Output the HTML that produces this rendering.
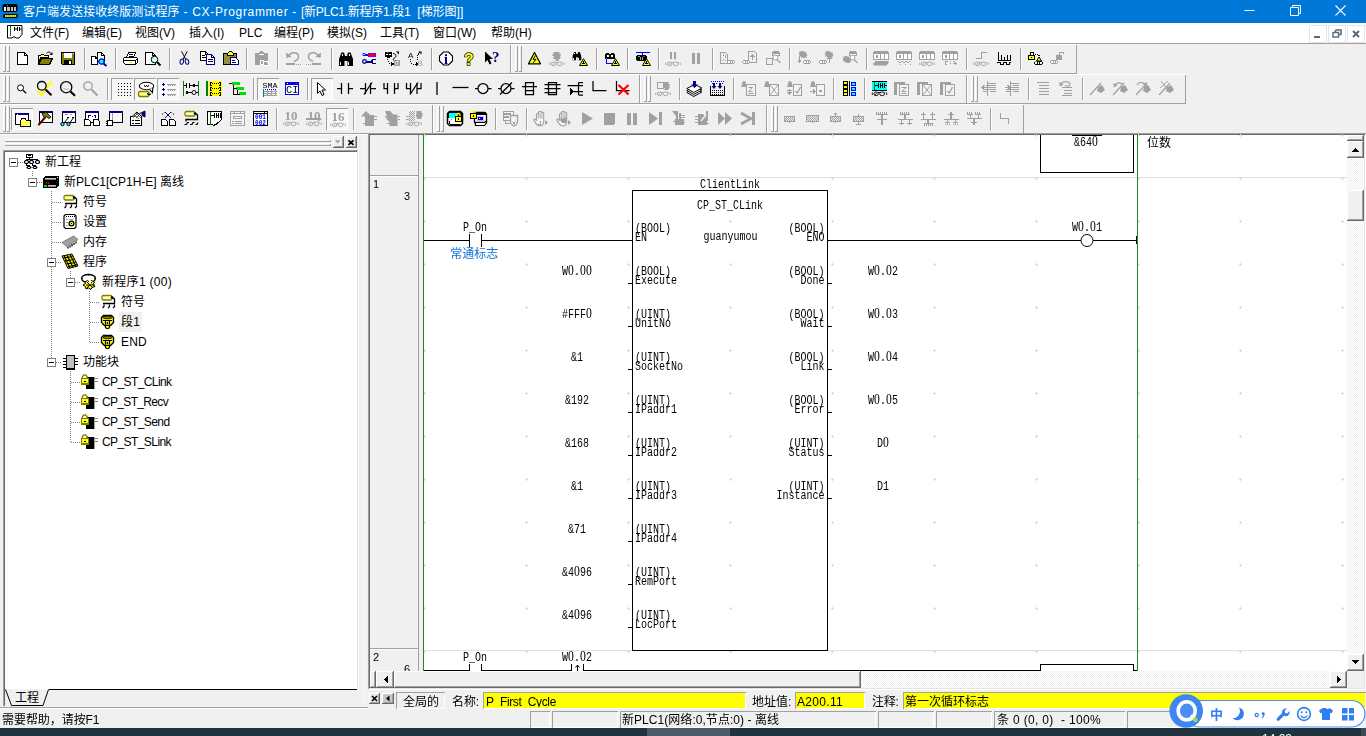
<!DOCTYPE html>
<html lang="zh-CN"><head><meta charset="utf-8"><title>CX-Programmer</title>
<style>
html,body{margin:0;padding:0}
body{width:1366px;height:736px;overflow:hidden;background:#f0f0f0;position:relative;
 font-family:"Liberation Sans","Noto Sans CJK SC",sans-serif;font-size:12px;color:#000}
.abs{position:absolute}
.tx{position:absolute;white-space:pre}
svg{position:absolute;overflow:hidden}
svg text{white-space:pre}
#tb,#ld{will-change:transform}

#title{left:0;top:0;width:1366px;height:23px;background:#0078d7;color:#fff}
#title .t{left:23px;top:0;line-height:22px;font-size:12px;white-space:pre;letter-spacing:0px}
#menu{left:0;top:23px;width:1366px;height:20px;background:#fff}
#menu span{position:absolute;top:1px;line-height:19px;font-size:12px;white-space:pre}
#menuline{left:0;top:43px;width:1366px;height:1px;background:#a0a0a0}
.mdib{position:absolute;top:2px;width:16px;height:16px;border:1px solid #e5e5e5;background:#fff}

#tb{left:0;top:44px}
#tb text{font-family:"Liberation Sans",sans-serif}

#lp{left:0;top:133px}
#lp text{font-family:"Liberation Sans",sans-serif}
.tr{font-size:12px}

#ld{left:368px;top:133px}
#ld text{font-family:"Liberation Mono",monospace;font-size:12px;fill:#000}
#ld text .z{font-family:"Liberation Serif",serif;font-size:14px;letter-spacing:0.2px}
#ld text .u{font-family:"Liberation Mono",monospace}
#ld text.cj{font-family:"Liberation Sans","Noto Sans CJK SC",sans-serif;font-size:12px}
#ld text.nm{font-family:"Liberation Sans",sans-serif;font-size:11px}

#bt{left:0;top:689px}
#ime{left:1160px;top:690px}
#ime text{font-family:"Liberation Sans","Noto Sans CJK SC",sans-serif}
#clock{left:1262px;top:732px;font-size:12px;line-height:14px;color:#fff}
</style></head>
<body>
<div id="title" class="abs"><svg style="left:2px;top:3px" width="17" height="17" viewBox="0 0 17 17">
<rect x="0.5" y="1" width="15" height="8" rx="2" fill="#000"/>
<rect x="2" y="4" width="2" height="4" fill="#fff"/><rect x="5" y="4" width="3" height="4" fill="#c0c0c0"/><rect x="9" y="4" width="2" height="4" fill="#c0c0c0"/><rect x="12" y="4" width="2" height="4" fill="#c0c0c0"/>
<rect x="5" y="2" width="1" height="1" fill="#0f0"/>
<path d="M2 11h13l1 1.500l-1 2.500h-13l-1-1.500z" fill="#000"/>
<path d="M3 12h11l0.500 1l-0.500 1h-11z" fill="#ff0"/>
<path d="M4 12l1 2M6 12l1 2M8 12l1 2M10 12l1 2M12 12l1 2" stroke="#808000" stroke-width="0.800"/>
</svg><span class="tx" style="left:23px;top:1px;line-height:22px;font-size:12px;letter-spacing:0.037px;">客户端发送接收终版测试程序</span><span class="tx" style="left:183.5px;top:1px;line-height:22px;font-size:12px;letter-spacing:0.676px;">- CX-Programmer -</span><span class="tx" style="left:301px;top:1px;line-height:22px;font-size:12px;letter-spacing:-0.277px;">[新PLC1.新程序1.段1</span><span class="tx" style="left:417.3px;top:1px;line-height:22px;font-size:12px;letter-spacing:-0.003px;">[梯形图]]</span><svg style="left:1228px;top:0" width="138" height="23" viewBox="0 0 138 23">
<path d="M16.500 10.500h10" stroke="#fff" stroke-width="1" fill="none"/>
<path d="M62.500 7.500h8v8h-8z M64.500 7.500v-2h8v8h-2" stroke="#fff" stroke-width="1" fill="none"/>
<path d="M107.500 5.500l10 10M117.500 5.500l-10 10" stroke="#fff" stroke-width="1.100" fill="none"/>
</svg></div><div id="menu" class="abs"><svg style="left:6px;top:1px" width="18" height="16" viewBox="0 0 18 16">
<path d="M1.500 1.500h14.500v9l-3 3.500h-3l-1-1h-2l-1 1h-4.500z" fill="#fff" stroke="#000" stroke-width="1"/>
<path d="M4.500 2v10" stroke="#008000" stroke-width="1"/>
<path d="M8.500 3v4M11.500 3v4M13.500 3v4M8.500 5h3M13.500 5h2" stroke="#000" stroke-width="1" fill="none"/>
</svg><span style="left:30px">文件(F)</span><span style="left:82px">编辑(E)</span><span style="left:135px">视图(V)</span><span style="left:189px">插入(I)</span><span style="left:239px">PLC</span><span style="left:274px">编程(P)</span><span style="left:327px">模拟(S)</span><span style="left:380px">工具(T)</span><span style="left:433px">窗口(W)</span><span style="left:491px">帮助(H)</span><div class="mdib" style="left:1309px"><svg style="left:0;top:0" width="16" height="16"><rect x="4" y="10" width="6" height="2" fill="#5a6b7b"/></svg></div><div class="mdib" style="left:1328px"><svg style="left:0;top:0" width="16" height="16"><path d="M6.500 4h5.500v4.500h-2M6.500 4v2" stroke="#5a6b7b" stroke-width="1.600" fill="none"/><rect x="4" y="6.500" width="5.500" height="4.500" stroke="#5a6b7b" stroke-width="1.400" fill="none"/></svg></div><div class="mdib" style="left:1347px"><svg style="left:0;top:0" width="16" height="16"><path d="M5 5l6 6M11 5l-6 6" stroke="#5a6b7b" stroke-width="2" fill="none"/></svg></div></div><div id="menuline" class="abs"></div><svg id="tb" width="1366" height="90" viewBox="0 0 1366 90" shape-rendering="crispEdges"><defs><pattern id="dith" width="2" height="2" patternUnits="userSpaceOnUse"><rect width="2" height="2" fill="#fff"/><rect width="1" height="1" fill="#f0f0f0"/><rect x="1" y="1" width="1" height="1" fill="#f0f0f0"/></pattern><pattern id="dithg" width="2" height="2" patternUnits="userSpaceOnUse"><rect width="2" height="2" fill="#f0f0f0"/><rect width="1" height="1" fill="#a0a0a0"/><rect x="1" y="1" width="1" height="1" fill="#a0a0a0"/></pattern></defs><path d="M0 89.500H1366" stroke="#a0a0a0" fill="none"/><path d="M510.5 0.5H-0.5V29" stroke="#fff" fill="none"/><path d="M510.5 0.5V29.5H-1" stroke="#a0a0a0" fill="none"/><path d="M3.5 27V2.5H5" stroke="#fff" fill="none"/><path d="M5.5 2V27.5H3" stroke="#a0a0a0" fill="none"/><path d="M7.5 27V2.5H9" stroke="#fff" fill="none"/><path d="M9.5 2V27.5H7" stroke="#a0a0a0" fill="none"/><g transform="translate(14,7)"><path d="M3.5 1.5h7l3 3v9h-10z" fill="#fff" stroke="#000" stroke-width="1" /><path d="M10.5 1.5v3h3" stroke="#000" stroke-width="1" fill="none" /></g><g transform="translate(37,7)"><path d="M1.5 12.5v-8h2l1-1h2l1 1h4v2h-8z" fill="#ffff80" stroke="#000" stroke-width="1" /><path d="M1.5 13.5l3-6h11l-3 6z" fill="#808000" stroke="#000" stroke-width="1" /><path d="M9.5 2.500c1-2 4-2 5 0.500" stroke="#000" stroke-width="1" fill="none" shape-rendering="geometricPrecision"/><path d="M15.500 1v3h-3z" fill="#000"  shape-rendering="geometricPrecision"/></g><g transform="translate(60,7)"><path d="M1.500 1.500h13v12h-12l-1-1z" fill="#808000" stroke="#000" stroke-width="1" /><rect x="4" y="2" width="8" height="5" fill="#fff"/><rect x="13" y="2" width="1" height="1" fill="#fff"/><rect x="4" y="9" width="8" height="4" fill="#000"/><rect x="9" y="10" width="2" height="3" fill="#fff"/></g><path d="M84.5 4V26" stroke="#a0a0a0" fill="none"/><path d="M85.5 4V26" stroke="#fff" fill="none"/><g transform="translate(91,7)"><path d="M0.500 5.500h4l2 2v6h-6z" fill="#fff" stroke="#000" stroke-width="1" /><path d="M4.500 5.500v2h2" stroke="#000" stroke-width="1" fill="none" /><path d="M6.500 1.500h4l2.500 2.500v6.500h-6.500z" fill="#fff" stroke="#000" stroke-width="1" /><path d="M10.500 1.500v2.500h2.500" stroke="#000" stroke-width="1" fill="none" /><circle cx="10.5" cy="10.5" r="2.7" fill="#00ffff" stroke="#0000ff" stroke-width="1.2" shape-rendering="geometricPrecision"/><path d="M12.500 12.500l3 2.500" stroke="#000080" stroke-width="2" fill="none" shape-rendering="geometricPrecision"/></g><path d="M115.5 4V26" stroke="#a0a0a0" fill="none"/><path d="M116.5 4V26" stroke="#fff" fill="none"/><g transform="translate(122,7)"><path d="M4.500 6.500l2-5h7l-2 5z" fill="#fff" stroke="#000" stroke-width="1" /><path d="M7 3.500h4M6.500 5h4" stroke="#000" stroke-width="1" fill="none" /><path d="M1.500 7.500l2-1.500h10l2 1.500v4l-2 2h-10l-2-2z" fill="#fff" stroke="#000" stroke-width="1" /><path d="M1.500 9.500h12l2-2M13.500 9.500v4" stroke="#000" stroke-width="1" fill="none" /><path d="M7 11.500h3" stroke="#ffff00" stroke-width="1" fill="none" /><path d="M3 13.500h10" stroke="#000" stroke-width="1" fill="none" /></g><g transform="translate(145,7)"><path d="M0.500 1.500h7l3 3v9h-10z" fill="#fff" stroke="#000" stroke-width="1" /><path d="M7.500 1.500v3h3" stroke="#000" stroke-width="1" fill="none" /><circle cx="9.5" cy="8.5" r="3.3" fill="#d0ffff" stroke="#000" stroke-width="1" shape-rendering="geometricPrecision"/><path d="M7.800 7.800l1.200-1.200" stroke="#00ffff" stroke-width="1" fill="none" shape-rendering="geometricPrecision"/><path d="M12 11l3.500 3.500" stroke="#000" stroke-width="2" fill="none" shape-rendering="geometricPrecision"/></g><path d="M169.5 4V26" stroke="#a0a0a0" fill="none"/><path d="M170.5 4V26" stroke="#fff" fill="none"/><g transform="translate(176,7)"><path d="M5.600 0.300l4 8M11.200 0.300l-4 8" stroke="#000" stroke-width="1" fill="none" shape-rendering="geometricPrecision"/><ellipse cx="5.800" cy="10.600" rx="1.700" ry="2.700" transform="rotate(15 5.800 10.600)" fill="none" stroke="#000080" stroke-width="1.050" shape-rendering="geometricPrecision"/><ellipse cx="11" cy="10.600" rx="1.700" ry="2.700" transform="rotate(-15 11 10.600)" fill="none" stroke="#000080" stroke-width="1.050" shape-rendering="geometricPrecision"/></g><g transform="translate(199,7)"><path d="M1.500 0.500h5l3 3v6h-8z" fill="#fff" stroke="#000" stroke-width="1" /><path d="M6.500 0.500v3h3M3 4.500h3M3 6.500h5" stroke="#000" stroke-width="1" fill="none" /><path d="M7.500 3.500h5l3 3v6.500h-8z" fill="#fff" stroke="#000080" stroke-width="1" /><path d="M12.500 3.500v3h3" stroke="#000080" stroke-width="1" fill="none" /><path d="M9 8.500h5M9 10.500h5" stroke="#000080" stroke-width="1" fill="none" /></g><g transform="translate(222,7)"><path d="M1.500 2.500h13v10.500h-13z" fill="#909040" stroke="#000" stroke-width="1" /><path d="M5.500 2.500l2-2h2l2 2v1.500h-6z" fill="#ffff00" stroke="#000" stroke-width="1" /><path d="M8.500 6.500h5l2.500 2.500v4.500h-7.500z" fill="#fff" stroke="#000080" stroke-width="1" /><path d="M10 9.500h3M10 11.500h4" stroke="#000080" stroke-width="1" fill="none" /></g><path d="M246.5 4V26" stroke="#a0a0a0" fill="none"/><path d="M247.5 4V26" stroke="#fff" fill="none"/><g transform="translate(253,7)"><path d="M2.500 2.500h12v10.500h-12z" fill="#a0a0a0" stroke="#a0a0a0" stroke-width="1" /><path d="M6 2.500l2-2h1l2 2z" fill="#a0a0a0" stroke="#a0a0a0" stroke-width="1" /><path d="M6 3.500h5" stroke="#fff" stroke-width="1" fill="none" /><path d="M7.500 9.500h3l1.500 1.500v2.500h-4.500z" fill="#a0a0a0" stroke="#fff" stroke-width="1" /><path d="M10.500 10.500h3.500l1.500 1.500v2h-5z" fill="#a0a0a0" stroke="#fff" stroke-width="1" /></g><path d="M277.5 4V26" stroke="#a0a0a0" fill="none"/><path d="M278.5 4V26" stroke="#fff" fill="none"/><g transform="translate(284,7)"><path d="M4.500 5.500c2-5 10-5 10 0.500c0 2.500-2 3.500-4.500 4.500" stroke="#a0a0a0" stroke-width="1.4" fill="none" shape-rendering="geometricPrecision"/><path d="M2 1.500l0.500 5.500l5-1.500z" fill="#a0a0a0"  shape-rendering="geometricPrecision"/><path d="M2 12.500h9" stroke="#a0a0a0" stroke-width="2" fill="none" /><path d="M12 13.500h1M14 13.500h1M16 13.500h1" stroke="#a0a0a0" stroke-width="1" fill="none" /></g><g transform="translate(307,7)"><g transform="translate(16,0) scale(-1,1)"><path d="M4.500 5.500c2-5 10-5 10 0.500c0 2.500-2 3.500-4.500 4.500" stroke="#a0a0a0" stroke-width="1.4" fill="none" shape-rendering="geometricPrecision"/><path d="M2 1.500l0.500 5.500l5-1.500z" fill="#a0a0a0"  shape-rendering="geometricPrecision"/><path d="M2 12.500h9" stroke="#a0a0a0" stroke-width="2" fill="none" /><path d="M12 13.500h1M14 13.500h1M16 13.500h1" stroke="#a0a0a0" stroke-width="1" fill="none" /></g></g><path d="M331.5 4V26" stroke="#a0a0a0" fill="none"/><path d="M332.5 4V26" stroke="#fff" fill="none"/><g transform="translate(338,7)"><path d="M1 15v-7l2.500-6.500h2.500l1 3.500h2l1-3.500h2.500l2.500 6.500v7h-5.500v-5h-3v5z" fill="#000"  shape-rendering="geometricPrecision"/><rect x="2" y="11" width="1" height="3" fill="#fff"/><rect x="10" y="11" width="1" height="3" fill="#fff"/><rect x="4" y="3" width="1" height="2" fill="#fff"/><rect x="11" y="3" width="1" height="2" fill="#fff"/></g><g transform="translate(361,7)"><path d="M2 3.500h5" stroke="#0000ff" stroke-width="2" fill="none" /><circle cx="3" cy="3.5" r="1.2" fill="#fff" stroke="#0000ff" stroke-width="1" shape-rendering="geometricPrecision"/><path d="M7 2h7v3h-7z" fill="#ff0000" stroke="#8000ff" stroke-width="1" /><path d="M4 10.500h7" stroke="#000080" stroke-width="2" fill="none" /><circle cx="3.5" cy="10.5" r="1.8" fill="#fff" stroke="#000080" stroke-width="1.3" shape-rendering="geometricPrecision"/><path d="M15 8.500h-3l-1 1v2l1 1h3" stroke="#000080" stroke-width="1.5" fill="none" /></g><g transform="translate(384,7)"><path d="M1.500 1.500h6v4h-6z" fill="#000" stroke="#000" stroke-width="1" /><rect x="2" y="3" width="2" height="1" fill="#fff"/><rect x="5" y="3" width="2" height="1" fill="#fff"/><rect x="3" y="1" width="1" height="1" fill="#0f0"/><path d="M3 6.500h3" stroke="#000" stroke-width="1" fill="none" /><path d="M9 2.500c2 0 3 1 3 3l-3 3l3 2" stroke="#000" stroke-width="1" fill="none" shape-rendering="geometricPrecision"/><path d="M12 0.500h3v3z" fill="#000"  shape-rendering="geometricPrecision"/><path d="M3 8v1M4 10v1M5 12v1" stroke="#000" stroke-width="1" fill="none" /><path d="M7 10.500l3.500 2.500l-3.500 2z" fill="#000"  /><path d="M10.500 9.500h5v5h-5z" fill="#d0d0d0" stroke="#a0a0a0" stroke-width="1" /><rect x="11" y="9" width="1" height="1" fill="#0a0"/><path d="M12.500 11v3M14.500 11v3" stroke="#a0a0a0" stroke-width="1" fill="none" /></g><g transform="translate(407,7)"><text x="1" y="7" font-size="8" fill="#000" font-weight="normal" text-anchor="start"  >A</text><text x="10.5" y="14.5" font-size="8" fill="#a0a0a0" font-weight="normal" text-anchor="start"  >B</text><path d="M3.500 8v2.500l2 2.500h3" stroke="#000" stroke-width="1" fill="none" stroke-dasharray="1 1"/><path d="M9 10.500l3 2.500l-3 2.500z" fill="#000"  /><path d="M10.500 9v-5l2-2.500" stroke="#000" stroke-width="1" fill="none" stroke-dasharray="1 1"/><path d="M11.500 0.500h3v3z" fill="#000"  shape-rendering="geometricPrecision"/></g><path d="M431.5 4V26" stroke="#a0a0a0" fill="none"/><path d="M432.5 4V26" stroke="#fff" fill="none"/><g transform="translate(438,7)"><path d="M5.500 1h5l4 4v5l-4 4h-5l-4-4v-5z" fill="#fff" stroke="#000" stroke-width="1.1" shape-rendering="geometricPrecision"/><text x="8" y="13" font-size="14" fill="#000080" font-weight="bold" text-anchor="middle" style="font-family:'Liberation Serif',serif" >i</text></g><g transform="translate(461,7)"><text x="8" y="13.5" font-size="16" fill="#ffff00" font-weight="bold" text-anchor="middle" style="font-family:'Liberation Sans',sans-serif" stroke="#000" stroke-width="1.400" paint-order="stroke" stroke-linejoin="round" shape-rendering="geometricPrecision">?</text></g><g transform="translate(484,7)"><path d="M1 0.500v11l2.500-2.500l2 4.500l2-1l-2-4.500h3.500z" fill="#000"  shape-rendering="geometricPrecision"/><text x="11.8" y="11" font-size="15" fill="#000080" font-weight="bold" text-anchor="middle" style="font-family:'Liberation Serif',serif" >?</text></g><path d="M1076.5 0.5H511.5V29" stroke="#fff" fill="none"/><path d="M1076.5 0.5V29.5H511" stroke="#a0a0a0" fill="none"/><path d="M515.5 27V2.5H517" stroke="#fff" fill="none"/><path d="M517.5 2V27.5H515" stroke="#a0a0a0" fill="none"/><path d="M519.5 27V2.5H521" stroke="#fff" fill="none"/><path d="M521.5 2V27.5H519" stroke="#a0a0a0" fill="none"/><g transform="translate(526,7)"><path d="M8.500 1.500l6 11.300h-12z" fill="#ffff00" stroke="#000" stroke-width="1.2" shape-rendering="geometricPrecision" stroke-linejoin="round"/><path d="M9.500 4.500l-2.500 3.800h3l-2.800 3.500" stroke="#000" stroke-width="1" fill="none" shape-rendering="geometricPrecision"/></g><g transform="translate(549,7)"><path d="M5 1h6l-1 2h2l-1 3h1l-3 4h-3l1-2h-3l1-3h-2z" fill="#a0a0a0"  shape-rendering="geometricPrecision"/><path d="M0.8 11.5v2.500M15.2 11.5v2.500" stroke="#a0a0a0" stroke-width="0.9" fill="none" shape-rendering="geometricPrecision"/><ellipse cx="4.6" cy="12.8" rx="2.200" ry="1.900" fill="none" stroke="#a0a0a0" stroke-width="0.900" shape-rendering="geometricPrecision"/><ellipse cx="10.6" cy="12.8" rx="2.400" ry="1.900" fill="none" stroke="#a0a0a0" stroke-width="0.900" shape-rendering="geometricPrecision"/><path d="M6.5 11.5h2.500M3.5 14l2-2.300M12.5 12.3l1.300-1.300" stroke="#a0a0a0" stroke-width="0.8" fill="none" shape-rendering="geometricPrecision"/></g><g transform="translate(572,7)"><g transform="translate(0,0) scale(0.62)"><path d="M1 15v-7l2.500-6.500h2.500l1 3.500h2l1-3.500h2.500l2.500 6.500v7h-5.500v-5h-3v5z" fill="#000"  shape-rendering="geometricPrecision"/><rect x="2" y="11" width="1" height="3" fill="#fff"/><rect x="10" y="11" width="1" height="3" fill="#fff"/><rect x="4" y="3" width="1" height="2" fill="#fff"/><rect x="11" y="3" width="1" height="2" fill="#fff"/></g><path d="M11.5 7.7l4 6.8h-8z" fill="#ffff00" stroke="#000" stroke-width="1" shape-rendering="geometricPrecision" stroke-linejoin="round"/><path d="M11.5 10v3" stroke="#000" stroke-width="1" fill="none" shape-rendering="geometricPrecision"/><path d="M10 12.5h3" stroke="#000" stroke-width="1" fill="none" shape-rendering="geometricPrecision"/></g><path d="M596.5 4V26" stroke="#a0a0a0" fill="none"/><path d="M597.5 4V26" stroke="#fff" fill="none"/><g transform="translate(603,7)"><path d="M2.500 3.500l1-1.500h2l0.500 1h2l0.500-1h2l1 1.500v4h-9z" fill="#000" stroke="#000" stroke-width="1" /><rect x="4" y="4" width="2" height="2" fill="#fff"/><rect x="8" y="4" width="2" height="2" fill="#fff"/><path d="M3.500 8v4.500h5" stroke="#0000ff" stroke-width="1" fill="none" /><rect x="3" y="7" width="1" height="1" fill="#0f0"/><path d="M12.5 7.7l4 6.8h-8z" fill="#ffff00" stroke="#000" stroke-width="1" shape-rendering="geometricPrecision" stroke-linejoin="round"/><path d="M12.5 10v3" stroke="#000" stroke-width="1" fill="none" shape-rendering="geometricPrecision"/><path d="M11 12.5h3" stroke="#000" stroke-width="1" fill="none" shape-rendering="geometricPrecision"/></g><path d="M627.5 4V26" stroke="#a0a0a0" fill="none"/><path d="M628.5 4V26" stroke="#fff" fill="none"/><g transform="translate(634,7)"><path d="M2 1.500h14M8.500 1.500v3" stroke="#0000ff" stroke-width="1" fill="none" /><path d="M3.500 4.500h8l1 1v3l-1 1h-8l-1-1v-3z" fill="#000" stroke="#000" stroke-width="1" /><rect x="4" y="5" width="2" height="1" fill="#0f0"/><rect x="9" y="5" width="2" height="1" fill="#ff0000"/><path d="M6.500 6v3M8.500 6v3" stroke="#a0a0a0" stroke-width="1" fill="none" /><path d="M12.5 7.7l4 6.8h-8z" fill="#ffff00" stroke="#000" stroke-width="1" shape-rendering="geometricPrecision" stroke-linejoin="round"/><path d="M12.5 10v3" stroke="#000" stroke-width="1" fill="none" shape-rendering="geometricPrecision"/><path d="M11 12.5h3" stroke="#000" stroke-width="1" fill="none" shape-rendering="geometricPrecision"/></g><path d="M658.5 4V26" stroke="#a0a0a0" fill="none"/><path d="M659.5 4V26" stroke="#fff" fill="none"/><g transform="translate(665,7)"><rect x="5" y="1" width="2" height="7" fill="#a0a0a0"/><rect x="9" y="1" width="2" height="7" fill="#a0a0a0"/><path d="M0.8 11.5v2.500M15.2 11.5v2.500" stroke="#a0a0a0" stroke-width="0.9" fill="none" shape-rendering="geometricPrecision"/><ellipse cx="4.6" cy="12.8" rx="2.200" ry="1.900" fill="none" stroke="#a0a0a0" stroke-width="0.900" shape-rendering="geometricPrecision"/><ellipse cx="10.6" cy="12.8" rx="2.400" ry="1.900" fill="none" stroke="#a0a0a0" stroke-width="0.900" shape-rendering="geometricPrecision"/><path d="M6.5 11.5h2.500M3.5 14l2-2.300M12.5 12.3l1.300-1.300" stroke="#a0a0a0" stroke-width="0.8" fill="none" shape-rendering="geometricPrecision"/></g><g transform="translate(688,7)"><rect x="4" y="2" width="3" height="11" fill="#a0a0a0"/><rect x="9" y="2" width="3" height="11" fill="#a0a0a0"/></g><path d="M712.5 4V26" stroke="#a0a0a0" fill="none"/><path d="M713.5 4V26" stroke="#fff" fill="none"/><g transform="translate(719,7)"><path d="M1.5 1.5h5l2 2v9h-7z" fill="#f0f0f0" stroke="#a0a0a0" stroke-width="1" /><path d="M4.500 3v2M6.500 4v3M4.500 8l-1 2M6.500 9v1" stroke="#a0a0a0" stroke-width="1" fill="none" /><path d="M9.5 9.5h5l1 1v1l-1 1h-5l-1-1v-1z" fill="#fff" stroke="#a0a0a0" stroke-width="1" /><path d="M11.5 9.5v3M13.5 9.5v3" stroke="#a0a0a0" stroke-width="1" fill="none" /></g><g transform="translate(742,7)"><path d="M6.5 0.5h6l2 2v9h-8z" fill="#f0f0f0" stroke="#a0a0a0" stroke-width="1" /><path d="M10.500 9v-5M8.500 6l2-2l2 2" stroke="#a0a0a0" stroke-width="1" fill="none" /><path d="M1.5 9.5h5l1 1v1l-1 1h-5l-1-1v-1z" fill="#fff" stroke="#a0a0a0" stroke-width="1" /><path d="M3.5 9.5v3M5.5 9.5v3" stroke="#a0a0a0" stroke-width="1" fill="none" /></g><g transform="translate(765,7)"><path d="M1.500 7.500h6v6h-6z" fill="#f0f0f0" stroke="#a0a0a0" stroke-width="1" /><path d="M7.500 1.500l1-1h5l1 1v3h-7z" fill="#fff" stroke="#a0a0a0" stroke-width="1" /><path d="M8 1.500h6" stroke="#a0a0a0" stroke-width="2" fill="none" /><circle cx="10.5" cy="6.5" r="2.5" fill="#fff" stroke="#a0a0a0" stroke-width="1" shape-rendering="geometricPrecision"/><path d="M12 8.500l3.500 3.500" stroke="#a0a0a0" stroke-width="1.3" fill="none" shape-rendering="geometricPrecision"/></g><path d="M789.5 4V26" stroke="#a0a0a0" fill="none"/><path d="M790.5 4V26" stroke="#fff" fill="none"/><g transform="translate(796,7)"><path d="M5 0h2v1l1-1l1 1l-1 1h1v2h-1l1 1l-1 1l-1-1v1h-2v-1l-1 1l-1-1l1-1h-1v-2h1l-1-1l1-1l1 1z" fill="#a0a0a0"  shape-rendering="geometricPrecision"/><path d="M7 1h2v1l1-1l1 1l-1 1h1v2h-1l1 1l-1 1l-1-1v1h-2v-1l-1 1l-1-1l1-1h-1v-2h1l-1-1l1-1l1 1z" fill="#a0a0a0"  shape-rendering="geometricPrecision"/><path d="M3.500 5v6M2 9.500l1.500 2l1.500-2" stroke="#a0a0a0" stroke-width="1" fill="none" /><path d="M8.5 9.5h5l1 1v1l-1 1h-5l-1-1v-1z" fill="#fff" stroke="#a0a0a0" stroke-width="1" /><path d="M10.5 9.5v3M12.5 9.5v3" stroke="#a0a0a0" stroke-width="1" fill="none" /></g><g transform="translate(819,7)"><path d="M8 0h2v1l1-1l1 1l-1 1h1v2h-1l1 1l-1 1l-1-1v1h-2v-1l-1 1l-1-1l1-1h-1v-2h1l-1-1l1-1l1 1z" fill="#a0a0a0"  shape-rendering="geometricPrecision"/><path d="M10 1h2v1l1-1l1 1l-1 1h1v2h-1l1 1l-1 1l-1-1v1h-2v-1l-1 1l-1-1l1-1h-1v-2h1l-1-1l1-1l1 1z" fill="#a0a0a0"  shape-rendering="geometricPrecision"/><path d="M10.500 12v-6M8.500 8l2-2l2 2" stroke="#a0a0a0" stroke-width="1" fill="none" /><path d="M1.5 9.5h5l1 1v1l-1 1h-5l-1-1v-1z" fill="#fff" stroke="#a0a0a0" stroke-width="1" /><path d="M3.5 9.5v3M5.5 9.5v3" stroke="#a0a0a0" stroke-width="1" fill="none" /></g><g transform="translate(842,7)"><path d="M3 5h2v1l1-1l1 1l-1 1h1v2h-1l1 1l-1 1l-1-1v1h-2v-1l-1 1l-1-1l1-1h-1v-2h1l-1-1l1-1l1 1z" fill="#a0a0a0"  shape-rendering="geometricPrecision"/><path d="M5 6h2v1l1-1l1 1l-1 1h1v2h-1l1 1l-1 1l-1-1v1h-2v-1l-1 1l-1-1l1-1h-1v-2h1l-1-1l1-1l1 1z" fill="#a0a0a0"  shape-rendering="geometricPrecision"/><path d="M7.500 1.500l1-1h5l1 1v3h-7z" fill="#fff" stroke="#a0a0a0" stroke-width="1" /><path d="M8 1.500h6" stroke="#a0a0a0" stroke-width="2" fill="none" /><circle cx="10.5" cy="6.5" r="2.5" fill="#fff" stroke="#a0a0a0" stroke-width="1" shape-rendering="geometricPrecision"/><path d="M12 8.500l3.500 3.500" stroke="#a0a0a0" stroke-width="1.3" fill="none" shape-rendering="geometricPrecision"/></g><path d="M866.5 4V26" stroke="#a0a0a0" fill="none"/><path d="M867.5 4V26" stroke="#fff" fill="none"/><g transform="translate(873,7)"><path d="M0.500 2l1.500-1.500h12l1.500 1.500v6.500h-15z" fill="#fff" stroke="#a0a0a0" stroke-width="1" /><path d="M1 1.500h14M1 2.500h14" stroke="#a0a0a0" stroke-width="1" fill="none" /><rect x="3" y="4" width="2" height="3" fill="#a0a0a0"/><path d="M7.500 3v5M11.500 3v5" stroke="#a0a0a0" stroke-width="1" fill="none" /><path d="M2.500 10h13v2l-2 2.500h-13v-2z" fill="#a0a0a0"  shape-rendering="geometricPrecision"/></g><g transform="translate(896,7)"><path d="M0.500 2l1.500-1.500h12l1.500 1.500v6.500h-15z" fill="#fff" stroke="#a0a0a0" stroke-width="1" /><path d="M1 1.500h14M1 2.500h14" stroke="#a0a0a0" stroke-width="1" fill="none" /><rect x="3" y="4" width="2" height="3" fill="#a0a0a0"/><path d="M7.500 3v5M11.500 3v5" stroke="#a0a0a0" stroke-width="1" fill="none" /><path d="M2 10l2 2l2-2l2 2l2-2l2 2l2-2" stroke="#a0a0a0" stroke-width="1" fill="none" shape-rendering="geometricPrecision"/><path d="M4 13.500h1M9 13.500h1M14 13.500h1" stroke="#a0a0a0" stroke-width="1" fill="none" /></g><g transform="translate(919,7)"><path d="M0.500 2l1.500-1.500h12l1.500 1.500v6.500h-15z" fill="#fff" stroke="#a0a0a0" stroke-width="1" /><path d="M1 1.500h14M1 2.500h14" stroke="#a0a0a0" stroke-width="1" fill="none" /><rect x="3" y="4" width="2" height="3" fill="#a0a0a0"/><path d="M7.500 3v5M11.500 3v5" stroke="#a0a0a0" stroke-width="1" fill="none" /><path d="M0.8 11.5v2.500M15.2 11.5v2.500" stroke="#a0a0a0" stroke-width="0.9" fill="none" shape-rendering="geometricPrecision"/><ellipse cx="4.6" cy="12.8" rx="2.200" ry="1.900" fill="none" stroke="#a0a0a0" stroke-width="0.900" shape-rendering="geometricPrecision"/><ellipse cx="10.6" cy="12.8" rx="2.400" ry="1.900" fill="none" stroke="#a0a0a0" stroke-width="0.900" shape-rendering="geometricPrecision"/><path d="M6.5 11.5h2.500M3.5 14l2-2.300M12.5 12.3l1.300-1.300" stroke="#a0a0a0" stroke-width="0.8" fill="none" shape-rendering="geometricPrecision"/></g><g transform="translate(942,7)"><path d="M0.500 2l1.500-1.500h12l1.500 1.500v6.500h-15z" fill="#fff" stroke="#a0a0a0" stroke-width="1" /><path d="M1 1.500h14M1 2.500h14" stroke="#a0a0a0" stroke-width="1" fill="none" /><rect x="3" y="4" width="2" height="3" fill="#a0a0a0"/><path d="M7.500 3v5M11.500 3v5" stroke="#a0a0a0" stroke-width="1" fill="none" /><path d="M3 10.500h3M8 10.500h1M11 10.500h2M3.500 11v2M3 13.500h2M8 12.500h1M11 12.500h3M13 11.500l1 1l-1 1" stroke="#a0a0a0" stroke-width="1" fill="none" /></g><path d="M966.5 4V26" stroke="#a0a0a0" fill="none"/><path d="M967.5 4V26" stroke="#fff" fill="none"/><g transform="translate(973,7)"><path d="M3 7.500h5.500v-6h5.500" stroke="#a0a0a0" stroke-width="1" fill="none" /><path d="M0.8 11.5v2.500M15.2 11.5v2.500" stroke="#a0a0a0" stroke-width="0.9" fill="none" shape-rendering="geometricPrecision"/><ellipse cx="4.6" cy="12.8" rx="2.200" ry="1.900" fill="none" stroke="#a0a0a0" stroke-width="0.900" shape-rendering="geometricPrecision"/><ellipse cx="10.6" cy="12.8" rx="2.400" ry="1.900" fill="none" stroke="#a0a0a0" stroke-width="0.900" shape-rendering="geometricPrecision"/><path d="M6.5 11.5h2.500M3.5 14l2-2.300M12.5 12.3l1.300-1.300" stroke="#a0a0a0" stroke-width="0.8" fill="none" shape-rendering="geometricPrecision"/></g><g transform="translate(996,7)"><path d="M2.500 1v9M5.500 4v6M8.500 6v4M11.500 4v6M14.500 4v6" stroke="#000" stroke-width="1" fill="none" /><path d="M2 9.500h13" stroke="#000" stroke-width="1.5" fill="none" /><path d="M1 11.500h3v2h3v-2h3v2h3v-2h2" stroke="#000" stroke-width="1" fill="none" /></g><path d="M1020.5 4V26" stroke="#a0a0a0" fill="none"/><path d="M1021.5 4V26" stroke="#fff" fill="none"/><g transform="translate(1027,7)"><path d="M3.500 4v-2l1-1h1l1 1v2" stroke="#000" stroke-width="1" fill="none" /><path d="M1.500 4.500h6v4h-6z" fill="#ffff00" stroke="#000" stroke-width="1" /><rect x="4" y="6" width="1" height="1" fill="#000"/><path d="M8 3.500h3l1.500 1.500v2" stroke="#000" stroke-width="1" fill="none" stroke-dasharray="1 1"/><path d="M12 6l2.500 4h-5z" fill="#ffff00" stroke="#000" stroke-width="1" shape-rendering="geometricPrecision"/><path d="M8.500 10.500h6l1 1v1l-1 1h-6l-1-1v-1z" fill="#fff" stroke="#000" stroke-width="1" /><rect x="8" y="10" width="2" height="1" fill="#0f0"/><path d="M10.500 11v2M12.500 11v2" stroke="#000" stroke-width="1" fill="none" /></g><g transform="translate(1050,7)"><path d="M9.500 4v-2l1-1h2l1 1v1" stroke="#a0a0a0" stroke-width="1" fill="none" /><path d="M6.500 4.500h5v4h-5z" fill="#a0a0a0" stroke="#a0a0a0" stroke-width="1" /><path d="M1.5 9.5h5l1 1v1l-1 1h-5l-1-1v-1z" fill="#fff" stroke="#a0a0a0" stroke-width="1" /><path d="M3.5 9.5v3M5.5 9.5v3" stroke="#a0a0a0" stroke-width="1" fill="none" /></g><path d="M639.5 30.5H-0.5V59" stroke="#fff" fill="none"/><path d="M639.5 30.5V59.5H-1" stroke="#a0a0a0" fill="none"/><path d="M3.5 57V32.5H5" stroke="#fff" fill="none"/><path d="M5.5 32V57.5H3" stroke="#a0a0a0" fill="none"/><path d="M7.5 57V32.5H9" stroke="#fff" fill="none"/><path d="M9.5 32V57.5H7" stroke="#a0a0a0" fill="none"/><g transform="translate(14,37)"><circle cx="6.5" cy="6.8" r="3" fill="#fff" stroke="#000" stroke-width="1" shape-rendering="geometricPrecision"/><path d="M9 9.300l3.200 3" stroke="#000" stroke-width="1.3" fill="none" shape-rendering="geometricPrecision"/></g><g transform="translate(37,37)"><path d="M0.500 10l3.700 4l10.800-13.800" stroke="#ffff00" stroke-width="2" fill="none" shape-rendering="geometricPrecision"/><circle cx="4.8" cy="4.8" r="4.3" fill="none" stroke="#000" stroke-width="1.3" shape-rendering="geometricPrecision"/><path d="M8.500 8.500l6 5.800" stroke="#000" stroke-width="2.2" fill="none" shape-rendering="geometricPrecision"/></g><g transform="translate(60,37)"><circle cx="6.2" cy="6.2" r="5.6" fill="none" stroke="#000" stroke-width="1.3" shape-rendering="geometricPrecision"/><path d="M4 7c1 2 3.500 2 4.500 0" stroke="#a0a0a0" stroke-width="1" fill="none" shape-rendering="geometricPrecision"/><path d="M10.500 10.500l4.500 4.300" stroke="#000" stroke-width="2.2" fill="none" shape-rendering="geometricPrecision"/></g><g transform="translate(83,37)"><circle cx="5" cy="5" r="4.2" fill="none" stroke="#a0a0a0" stroke-width="1.3" shape-rendering="geometricPrecision"/><path d="M8.500 8.500l6 6" stroke="#a0a0a0" stroke-width="2" fill="none" shape-rendering="geometricPrecision"/></g><path d="M107.5 34V56" stroke="#a0a0a0" fill="none"/><path d="M108.5 34V56" stroke="#fff" fill="none"/><rect x="112" y="35" width="21" height="21" fill="url(#dith)"/><path d="M111.5 56V34.5H133" stroke="#a0a0a0" fill="none"/><path d="M132.5 35V55.5H112" stroke="#fff" fill="none"/><g transform="translate(115,38)"><rect x="3" y="1" width="1" height="1" fill="#000"/><rect x="3" y="4" width="1" height="1" fill="#000"/><rect x="3" y="7" width="1" height="1" fill="#000"/><rect x="3" y="10" width="1" height="1" fill="#000"/><rect x="3" y="13" width="1" height="1" fill="#000"/><rect x="6" y="1" width="1" height="1" fill="#000"/><rect x="6" y="4" width="1" height="1" fill="#000"/><rect x="6" y="7" width="1" height="1" fill="#000"/><rect x="6" y="10" width="1" height="1" fill="#000"/><rect x="6" y="13" width="1" height="1" fill="#000"/><rect x="9" y="1" width="1" height="1" fill="#000"/><rect x="9" y="4" width="1" height="1" fill="#000"/><rect x="9" y="7" width="1" height="1" fill="#000"/><rect x="9" y="10" width="1" height="1" fill="#000"/><rect x="9" y="13" width="1" height="1" fill="#000"/><rect x="12" y="1" width="1" height="1" fill="#000"/><rect x="12" y="4" width="1" height="1" fill="#000"/><rect x="12" y="7" width="1" height="1" fill="#000"/><rect x="12" y="10" width="1" height="1" fill="#000"/><rect x="12" y="13" width="1" height="1" fill="#000"/><rect x="15" y="1" width="1" height="1" fill="#000"/><rect x="15" y="4" width="1" height="1" fill="#000"/><rect x="15" y="7" width="1" height="1" fill="#000"/><rect x="15" y="10" width="1" height="1" fill="#000"/><rect x="15" y="13" width="1" height="1" fill="#000"/></g><rect x="135" y="35" width="21" height="21" fill="url(#dith)"/><path d="M134.5 56V34.5H156" stroke="#a0a0a0" fill="none"/><path d="M155.5 35V55.5H135" stroke="#fff" fill="none"/><g transform="translate(138,38)"><ellipse cx="8.500" cy="4" rx="7.200" ry="3.700" fill="#fff" stroke="#000" stroke-width="1.100" shape-rendering="geometricPrecision"/><path d="M11.500 7.200l3 3.400l0.200-4.800z" fill="#fff"  shape-rendering="geometricPrecision"/><path d="M11.500 7.400l3 3.200l0.200-4.600" stroke="#000" stroke-width="1.1" fill="none" shape-rendering="geometricPrecision"/><path d="M6.300 3l1 2l1.200-1.600l1.200 1.600l1-2" stroke="#000" stroke-width="0.9" fill="none" shape-rendering="geometricPrecision"/><path d="M1.500 9.500h8.500l1 1v3l-1 1h-8.500l-1-1v-3z" fill="#ffff60" stroke="#808000" stroke-width="1.3" shape-rendering="geometricPrecision"/><path d="M2 11.500h8M3 12.500h8" stroke="#fff" stroke-width="1" fill="none" stroke-dasharray="1 1"/><path d="M9.500 11.200c0.300 1.800 2 1.800 3.200 0.500" stroke="#000" stroke-width="1.4" fill="none" shape-rendering="geometricPrecision"/></g><rect x="158" y="35" width="21" height="21" fill="url(#dith)"/><path d="M157.5 56V34.5H179" stroke="#a0a0a0" fill="none"/><path d="M178.5 35V55.5H158" stroke="#fff" fill="none"/><g transform="translate(161,38)"><path d="M2.500 1l1.500 1.500l-1.500 1.500l-1.500-1.500z" fill="#000080"  /><path d="M6 2.5h9" stroke="#a0a0a0" stroke-width="1" fill="none" /><path d="M7.500 3v1M9.500 3v1M11.500 3v1M13.500 3v1" stroke="#a0a0a0" stroke-width="1" fill="none" /><path d="M2.500 6l1.500 1.500l-1.500 1.500l-1.500-1.500z" fill="#000080"  /><path d="M6 7.5h9" stroke="#a0a0a0" stroke-width="1" fill="none" /><path d="M7.500 8v1M9.500 8v1M11.500 8v1M13.500 8v1" stroke="#a0a0a0" stroke-width="1" fill="none" /><path d="M2.500 11l1.500 1.500l-1.500 1.500l-1.500-1.500z" fill="#000080"  /><path d="M6 12.5h9" stroke="#a0a0a0" stroke-width="1" fill="none" /><path d="M7.500 13v1M9.500 13v1M11.500 13v1M13.500 13v1" stroke="#a0a0a0" stroke-width="1" fill="none" /></g><g transform="translate(183,37)"><path d="M0.500 0v15M15.500 0v15" stroke="#008000" stroke-width="1" fill="none" /><path d="M1 4.500h3M6 4.500h4M12 4.500h3M3.500 2v5M6.500 2v5" stroke="#000" stroke-width="1" fill="none" /><rect x="10" y="3" width="2" height="3" fill="#000"/><path d="M5 11.500h4M13 11.500h2" stroke="#000" stroke-width="1" fill="none" /><rect x="3" y="10" width="2" height="3" fill="#000"/><circle cx="11" cy="11.5" r="2" fill="#fff" stroke="#000" stroke-width="1" shape-rendering="geometricPrecision"/></g><g transform="translate(206,37)"><rect x="0" y="0" width="2" height="15" fill="#008000"/><rect x="3" y="0" width="13" height="15" fill="#ffff00"/><path d="M6 1.5h-1.500v3h1.500M13 1.5h1.500v3h-1.500" stroke="#000" stroke-width="1" fill="none" /><path d="M6 2.5h7" stroke="#000" stroke-width="1" fill="none" stroke-dasharray="1 1"/><path d="M6 6.5h-1.500v3h1.500M13 6.5h1.500v3h-1.500" stroke="#000" stroke-width="1" fill="none" /><path d="M6 7.5h7" stroke="#000" stroke-width="1" fill="none" stroke-dasharray="1 1"/><path d="M6 11.5h-1.500v3h1.500M13 11.5h1.500v3h-1.500" stroke="#000" stroke-width="1" fill="none" /><path d="M6 12.5h7" stroke="#000" stroke-width="1" fill="none" stroke-dasharray="1 1"/></g><g transform="translate(229,37)"><rect x="3" y="1" width="8" height="3" fill="#00e000"/><rect x="7" y="6" width="8" height="3" fill="#00e000"/><rect x="10" y="11" width="7" height="3" fill="#00e000"/><path d="M0 2.500h3M4.500 4v10M4.500 7.500h3M8.500 9v5M4.500 13.500h6" stroke="#000" stroke-width="1.3" fill="none" /></g><path d="M253.5 34V56" stroke="#a0a0a0" fill="none"/><path d="M254.5 34V56" stroke="#fff" fill="none"/><rect x="258" y="35" width="21" height="21" fill="url(#dith)"/><path d="M257.5 56V34.5H279" stroke="#a0a0a0" fill="none"/><path d="M278.5 35V55.5H258" stroke="#fff" fill="none"/><g transform="translate(261,38)"><text x="9" y="5.5" font-size="7.5" fill="#000" font-weight="normal" text-anchor="middle" style="font-family:'Liberation Mono',monospace" textLength="15" lengthAdjust="spacingAndGlyphs">SMA</text><path d="M2 7.500h14" stroke="#0000ff" stroke-width="1" fill="none" stroke-dasharray="1 1"/><path d="M2.500 7v8" stroke="#008080" stroke-width="1" fill="none" /><path d="M3 9.500h13M3 11.500h13M3 13.500h13M6.500 8v6M10.500 8v6M14.500 8v6" stroke="#a0a0a0" stroke-width="1" fill="none" /></g><g transform="translate(283,37)"><path d="M2.500 1.500h13v12h-13z" fill="#fff" stroke="#0000ff" stroke-width="1" /><rect x="3" y="1" width="13" height="3" fill="#0000ff"/><rect x="4" y="2" width="1" height="1" fill="#fff"/><rect x="13" y="2" width="1" height="1" fill="#ff0000"/><text x="9.2" y="12" font-size="10.5" fill="#000" font-weight="normal" text-anchor="middle" style="font-family:'Liberation Mono',monospace" >CI</text></g><path d="M307.5 34V56" stroke="#a0a0a0" fill="none"/><path d="M308.5 34V56" stroke="#fff" fill="none"/><rect x="312" y="35" width="21" height="21" fill="url(#dith)"/><path d="M311.5 56V34.5H333" stroke="#a0a0a0" fill="none"/><path d="M332.5 35V55.5H312" stroke="#fff" fill="none"/><g transform="translate(315,38)"><path d="M2.500 0.500v11l2.500-2.500l2 4.500l2-1l-2-4.500h3.500z" fill="#fff" stroke="#000" stroke-width="1" shape-rendering="geometricPrecision"/></g><g transform="translate(337,37)"><path d="M0 7.500h4.500M11.500 7.500h4.500M4.500 2v11M11.500 2v11" stroke="#000" stroke-width="1.25" fill="none" shape-rendering="geometricPrecision"/></g><g transform="translate(360,37)"><path d="M0 7.500h5.500M10.500 7.500h5.500M5.500 2v11M10.500 2v11" stroke="#000" stroke-width="1.25" fill="none" shape-rendering="geometricPrecision"/><path d="M4 13.500l8-12" stroke="#000" stroke-width="1.3" fill="none" shape-rendering="geometricPrecision"/></g><g transform="translate(383,37)"><path d="M1 2v5.500h3.500M4.500 2v11M11.500 2v11M11.500 7.500h3.500v-5.500" stroke="#000" stroke-width="1.25" fill="none" shape-rendering="geometricPrecision"/></g><g transform="translate(406,37)"><path d="M0.500 2v5.500h4M4.500 2v11M11 2v11M11 7.500h4v-5.500" stroke="#000" stroke-width="1.25" fill="none" shape-rendering="geometricPrecision"/><path d="M4 13.500l8-12" stroke="#000" stroke-width="1.3" fill="none" shape-rendering="geometricPrecision"/></g><g transform="translate(429,37)"><path d="M8 1v13" stroke="#000" stroke-width="1.3" fill="none" shape-rendering="geometricPrecision"/></g><g transform="translate(452,37)"><path d="M0.500 6.500h16" stroke="#000" stroke-width="1.3" fill="none" shape-rendering="geometricPrecision"/></g><g transform="translate(475,37)"><path d="M0 7.500h3M13 7.500h3.500" stroke="#000" stroke-width="1.25" fill="none" shape-rendering="geometricPrecision"/><circle cx="8" cy="7.5" r="5" fill="none" stroke="#000" stroke-width="1.25" shape-rendering="geometricPrecision"/></g><g transform="translate(498,37)"><path d="M0 7.500h3M13 7.500h3.500" stroke="#000" stroke-width="1.25" fill="none" shape-rendering="geometricPrecision"/><circle cx="8" cy="7.5" r="5" fill="none" stroke="#000" stroke-width="1.25" shape-rendering="geometricPrecision"/><path d="M2 13.500l12-12" stroke="#000" stroke-width="1.3" fill="none" shape-rendering="geometricPrecision"/></g><g transform="translate(521,37)"><path d="M4.500 1.500h8v12h-8z" fill="none" stroke="#000" stroke-width="1.25" shape-rendering="geometricPrecision"/><path d="M1 5.500h15M4.500 9.500h8" stroke="#000" stroke-width="1.25" fill="none" shape-rendering="geometricPrecision"/></g><g transform="translate(544,37)"><path d="M4.500 1.500h8v12h-8z" fill="none" stroke="#000" stroke-width="1.25" shape-rendering="geometricPrecision"/><path d="M0.500 3.500h16M0.500 7.500h16M0.500 11.500h12" stroke="#000" stroke-width="1.25" fill="none" shape-rendering="geometricPrecision"/></g><g transform="translate(567,37)"><path d="M0.500 4.500h15.500M11.500 1.500v12.500M11.500 1.500h4.500M11.500 14h4.500M7 10.500h9" stroke="#000" stroke-width="1.25" fill="none" shape-rendering="geometricPrecision"/><path d="M3 7v7l4.500-3.500z" fill="#000"  /></g><g transform="translate(590,37)"><path d="M3 0v9.500h13.500" stroke="#000" stroke-width="1.25" fill="none" shape-rendering="geometricPrecision"/></g><g transform="translate(613,37)"><path d="M3.500 0v9.500h13" stroke="#000" stroke-width="1.25" fill="none" shape-rendering="geometricPrecision"/><path d="M5.500 4l10 9.500M15.500 4l-10 9.500" stroke="#ff0000" stroke-width="2.2" fill="none" shape-rendering="geometricPrecision"/></g><path d="M966.5 30.5H640.5V59" stroke="#fff" fill="none"/><path d="M966.5 30.5V59.5H640" stroke="#a0a0a0" fill="none"/><path d="M644.5 57V32.5H646" stroke="#fff" fill="none"/><path d="M646.5 32V57.5H644" stroke="#a0a0a0" fill="none"/><path d="M648.5 57V32.5H650" stroke="#fff" fill="none"/><path d="M650.5 32V57.5H648" stroke="#a0a0a0" fill="none"/><g transform="translate(655,37)"><path d="M2.500 1.500h6v6h-6z" fill="#f0f0f0" stroke="#a0a0a0" stroke-width="1" /><path d="M8 1h6l-1 2h2l-1 3h1l-2 3h-4l1-2h-2z" fill="#a0a0a0"  shape-rendering="geometricPrecision"/><path d="M0.8 11.5v2.500M15.2 11.5v2.500" stroke="#a0a0a0" stroke-width="0.9" fill="none" shape-rendering="geometricPrecision"/><ellipse cx="4.6" cy="12.8" rx="2.200" ry="1.900" fill="none" stroke="#a0a0a0" stroke-width="0.900" shape-rendering="geometricPrecision"/><ellipse cx="10.6" cy="12.8" rx="2.400" ry="1.900" fill="none" stroke="#a0a0a0" stroke-width="0.900" shape-rendering="geometricPrecision"/><path d="M6.5 11.5h2.500M3.5 14l2-2.300M12.5 12.3l1.300-1.300" stroke="#a0a0a0" stroke-width="0.8" fill="none" shape-rendering="geometricPrecision"/></g><path d="M679.5 34V56" stroke="#a0a0a0" fill="none"/><path d="M680.5 34V56" stroke="#fff" fill="none"/><g transform="translate(686,37)"><path d="M0.800 11.5l8-4l7 3.500l-8 4.500z" fill="#fff" stroke="#000" stroke-width="1" shape-rendering="geometricPrecision"/><path d="M0.800 9.5l8-4l7 3.500l-8 4.500z" fill="#fff" stroke="#000" stroke-width="1" shape-rendering="geometricPrecision"/><path d="M0.800 7.5l8-4l7 3.500l-8 4.500z" fill="#fff" stroke="#000" stroke-width="1" shape-rendering="geometricPrecision"/><path d="M7 0h3v3.500h2l-3.500 3.500l-3.500-3.500h2z" fill="#000080"  shape-rendering="geometricPrecision"/></g><g transform="translate(709,37)"><rect x="2" y="0" width="1" height="1" fill="#0000ff"/><rect x="4" y="0" width="1" height="1" fill="#0000ff"/><rect x="6" y="0" width="1" height="1" fill="#0000ff"/><rect x="8" y="0" width="1" height="1" fill="#0000ff"/><rect x="10" y="0" width="1" height="1" fill="#0000ff"/><rect x="12" y="0" width="1" height="1" fill="#0000ff"/><rect x="14" y="0" width="1" height="1" fill="#0000ff"/><rect x="3" y="2" width="1" height="1" fill="#0000ff"/><rect x="7" y="2" width="1" height="1" fill="#0000ff"/><rect x="11" y="2" width="1" height="1" fill="#0000ff"/><rect x="13" y="2" width="1" height="1" fill="#0000ff"/><path d="M4 2h2v3h1.500l-2.500 3l-2.500-3h1.500z" fill="#000080"  shape-rendering="geometricPrecision"/><path d="M10 2h2v3h1.500l-2.500 3l-2.500-3h1.500z" fill="#000080"  shape-rendering="geometricPrecision"/><path d="M1.500 5v9.500h14v-9.500" stroke="#000" stroke-width="1.3" fill="none" /><rect x="3" y="9" width="1" height="1" fill="#000"/><rect x="5" y="9" width="1" height="1" fill="#000"/><rect x="7" y="9" width="1" height="1" fill="#000"/><rect x="9" y="9" width="1" height="1" fill="#000"/><rect x="11" y="9" width="1" height="1" fill="#000"/><rect x="13" y="9" width="1" height="1" fill="#000"/><rect x="3" y="11" width="1" height="1" fill="#000"/><rect x="5" y="11" width="1" height="1" fill="#000"/><rect x="7" y="11" width="1" height="1" fill="#000"/><rect x="9" y="11" width="1" height="1" fill="#000"/><rect x="11" y="11" width="1" height="1" fill="#000"/><rect x="13" y="11" width="1" height="1" fill="#000"/><rect x="3" y="13" width="1" height="1" fill="#000"/><rect x="5" y="13" width="1" height="1" fill="#000"/><rect x="7" y="13" width="1" height="1" fill="#000"/><rect x="9" y="13" width="1" height="1" fill="#000"/><rect x="11" y="13" width="1" height="1" fill="#000"/><rect x="13" y="13" width="1" height="1" fill="#000"/></g><path d="M733.5 34V56" stroke="#a0a0a0" fill="none"/><path d="M734.5 34V56" stroke="#fff" fill="none"/><g transform="translate(740,37)"><path d="M1 6c0-1 1-1.500 1-3c0-2 1-3 2-3s2 1 2 3c0 1.500 1 2 1 3z" fill="#a0a0a0"  shape-rendering="geometricPrecision"/><path d="M6.5 3.5h9v11h-9z" fill="#f4f4f4" stroke="#a0a0a0" stroke-width="1" /><path d="M8.500 6.500h4l-4 4h4M8.500 12.500h5" stroke="#a0a0a0" stroke-width="1" fill="none" shape-rendering="geometricPrecision"/></g><g transform="translate(763,37)"><path d="M1 6c0-1 1-1.500 1-3c0-2 1-3 2-3s2 1 2 3c0 1.500 1 2 1 3z" fill="#a0a0a0"  shape-rendering="geometricPrecision"/><path d="M6.5 3.5h9v11h-9z" fill="#f4f4f4" stroke="#a0a0a0" stroke-width="1" /><path d="M7 4l8 10M15 4l-8 10" stroke="#a0a0a0" stroke-width="1" fill="none" shape-rendering="geometricPrecision"/></g><g transform="translate(786,37)"><path d="M1 6c0-1 1-1.500 1-3c0-2 1-3 2-3s2 1 2 3c0 1.500 1 2 1 3z" fill="#a0a0a0"  shape-rendering="geometricPrecision"/><path d="M7.5 3.5h8v11h-8z" fill="#f4f4f4" stroke="#a0a0a0" stroke-width="1" /><path d="M9.500 10l2 2l3-6" stroke="#a0a0a0" stroke-width="1.3" fill="none" shape-rendering="geometricPrecision"/><path d="M3.500 8v4M1.500 11l2 2l2-2" stroke="#a0a0a0" stroke-width="1" fill="none" /><path d="M1 9.500h5" stroke="#a0a0a0" stroke-width="1" fill="none" /></g><g transform="translate(809,37)"><path d="M1 6c0-1 1-1.500 1-3c0-2 1-3 2-3s2 1 2 3c0 1.500 1 2 1 3z" fill="#a0a0a0"  shape-rendering="geometricPrecision"/><path d="M7.5 3.5h8v11h-8z" fill="#f4f4f4" stroke="#a0a0a0" stroke-width="1" /><rect x="10" y="9" width="3" height="2" fill="#a0a0a0"/><path d="M1 10.500h5M4 8.500l2 2l-2 2" stroke="#a0a0a0" stroke-width="1" fill="none" /></g><path d="M833.5 34V56" stroke="#a0a0a0" fill="none"/><path d="M834.5 34V56" stroke="#fff" fill="none"/><g transform="translate(840,37)"><path d="M3.500 1v13M9.500 0v15" stroke="#000" stroke-width="1.3" fill="none" /><path d="M3.500 0.5h4v3h-4z" fill="#ffff00" stroke="#000" stroke-width="1" /><path d="M3.500 4.5h4v3h-4z" fill="#ffff00" stroke="#000" stroke-width="1" /><path d="M3.500 8.5h4v3h-4z" fill="#ffff00" stroke="#000" stroke-width="1" /><path d="M3.500 11.5h4v3h-4z" fill="#ffff00" stroke="#000" stroke-width="1" /><path d="M11.500 1.5h4v3h-4z" fill="#00ffff" stroke="#0000ff" stroke-width="1" /><path d="M11.500 6.5h4v3h-4z" fill="#00ffff" stroke="#0000ff" stroke-width="1" /><path d="M11.500 11.5h4v3h-4z" fill="#00ffff" stroke="#0000ff" stroke-width="1" /></g><path d="M864.5 34V56" stroke="#a0a0a0" fill="none"/><path d="M865.5 34V56" stroke="#fff" fill="none"/><g transform="translate(871,37)"><rect x="1" y="0" width="15" height="9" fill="#00ffff"/><path d="M3.500 0v9" stroke="#008000" stroke-width="1" fill="none" /><path d="M1 0.500h15M1 9.500h15" stroke="#000" stroke-width="1.3" fill="none" /><path d="M4 4.500h3M9 4.500h2M13 4.500h3M7.500 2v5M9.500 2v5M11.500 2v5M13.500 2v5" stroke="#000" stroke-width="1" fill="none" /><path d="M1.3 11.5v2.500M15.7 11.5v2.500" stroke="#000" stroke-width="0.9" fill="none" shape-rendering="geometricPrecision"/><ellipse cx="5.1" cy="12.8" rx="2.200" ry="1.900" fill="none" stroke="#000" stroke-width="0.900" shape-rendering="geometricPrecision"/><ellipse cx="11.1" cy="12.8" rx="2.400" ry="1.900" fill="none" stroke="#000" stroke-width="0.900" shape-rendering="geometricPrecision"/><path d="M7 11.5h2.500M4 14l2-2.300M13 12.3l1.300-1.300" stroke="#000" stroke-width="0.8" fill="none" shape-rendering="geometricPrecision"/></g><g transform="translate(894,37)"><path d="M0 1h11v2h-8v11h-3z" fill="#a0a0a0"  /><path d="M5.500 3.500h9v11h-9z" fill="#f4f4f4" stroke="#a0a0a0" stroke-width="1" /><path d="M7.500 6.500h5l-5 4h5M7.500 12.500h5" stroke="#a0a0a0" stroke-width="1" fill="none" shape-rendering="geometricPrecision"/></g><g transform="translate(917,37)"><path d="M0 1h11v2h-8v11h-3z" fill="#a0a0a0"  /><path d="M5.500 3.500h9v11h-9z" fill="#f4f4f4" stroke="#a0a0a0" stroke-width="1" /><path d="M6 4l8 10M14 4l-8 10" stroke="#a0a0a0" stroke-width="1" fill="none" shape-rendering="geometricPrecision"/></g><g transform="translate(940,37)"><path d="M0 1h11v2h-8v11h-3z" fill="#a0a0a0"  /><path d="M5.500 3.500h9v11h-9z" fill="#f4f4f4" stroke="#a0a0a0" stroke-width="1" /><path d="M7.500 10l2 2l3-6" stroke="#a0a0a0" stroke-width="1.3" fill="none" shape-rendering="geometricPrecision"/></g><path d="M1185.5 30.5H967.5V59" stroke="#fff" fill="none"/><path d="M1185.5 30.5V59.5H967" stroke="#a0a0a0" fill="none"/><path d="M971.5 57V32.5H973" stroke="#fff" fill="none"/><path d="M973.5 32V57.5H971" stroke="#a0a0a0" fill="none"/><path d="M975.5 57V32.5H977" stroke="#fff" fill="none"/><path d="M977.5 32V57.5H975" stroke="#a0a0a0" fill="none"/><g transform="translate(981,37)"><path d="M7 2.500h8M5 4.500h10M7 6.500h8M2 8.500h13M2 10.500h5M9 10.500h6M6.500 0v15" stroke="#a0a0a0" stroke-width="1" fill="none" /><path d="M1 6.500h5M3.500 4l-2.500 2.500l2.500 2.500" stroke="#a0a0a0" stroke-width="1" fill="none" /></g><g transform="translate(1004,37)"><path d="M7 2.500h8M9 4.500h6M7 6.500h8M2 8.500h13M2 10.500h5M9 10.500h6M6.500 0v15" stroke="#a0a0a0" stroke-width="1" fill="none" /><path d="M1 6.500h5M3.500 4l2.500 2.500l-2.500 2.500" stroke="#a0a0a0" stroke-width="1" fill="none" /></g><path d="M1028.5 34V56" stroke="#a0a0a0" fill="none"/><path d="M1029.5 34V56" stroke="#fff" fill="none"/><g transform="translate(1035,37)"><path d="M2 1.500h12M4 4.500h10M4 7.500h10M4 10.500h10M4 13.500h10" stroke="#a0a0a0" stroke-width="1" fill="none" /></g><g transform="translate(1058,37)"><path d="M4 6.500h10M6 9.500h8M6 12.500h8M4 14.500h10" stroke="#a0a0a0" stroke-width="1" fill="none" /><path d="M3 4.500c0-5 9-5 9-1c0 2-3 2-5 1" stroke="#a0a0a0" stroke-width="1.2" fill="none" shape-rendering="geometricPrecision"/><path d="M1 1l1 4.500l3.500-2z" fill="#a0a0a0"  shape-rendering="geometricPrecision"/></g><path d="M1082.5 34V56" stroke="#a0a0a0" fill="none"/><path d="M1083.5 34V56" stroke="#fff" fill="none"/><g transform="translate(1089,37)"><path d="M1 14l11-12" stroke="#a0a0a0" stroke-width="1.2" fill="none" shape-rendering="geometricPrecision"/><path d="M9 6l4-2l3 5l-4 3l-4-2z" fill="#a0a0a0"  shape-rendering="geometricPrecision"/></g><g transform="translate(1112,37)"><path d="M1 14l11-12" stroke="#a0a0a0" stroke-width="1.2" fill="none" shape-rendering="geometricPrecision"/><path d="M9 6l4-2l3 5l-4 3l-4-2z" fill="#a0a0a0"  shape-rendering="geometricPrecision"/><path d="M3 5c1-4 6-4 8-1" stroke="#a0a0a0" stroke-width="1.2" fill="none" shape-rendering="geometricPrecision"/><path d="M1 2l1 4.500l3.500-2z" fill="#a0a0a0"  shape-rendering="geometricPrecision"/></g><g transform="translate(1135,37)"><path d="M1 14l11-12" stroke="#a0a0a0" stroke-width="1.2" fill="none" shape-rendering="geometricPrecision"/><path d="M9 6l4-2l3 5l-4 3l-4-2z" fill="#a0a0a0"  shape-rendering="geometricPrecision"/><path d="M2 4c2-4 7-3 8 0" stroke="#a0a0a0" stroke-width="1.2" fill="none" shape-rendering="geometricPrecision"/><path d="M12 1l-0.500 4.500l-3.500-2z" fill="#a0a0a0"  shape-rendering="geometricPrecision"/></g><g transform="translate(1158,37)"><path d="M1 14l11-12" stroke="#a0a0a0" stroke-width="1.2" fill="none" shape-rendering="geometricPrecision"/><path d="M9 6l4-2l3 5l-4 3l-4-2z" fill="#a0a0a0"  shape-rendering="geometricPrecision"/><path d="M3 0l7 9M10 0l-8 7" stroke="#a0a0a0" stroke-width="1" fill="none" shape-rendering="geometricPrecision"/></g><path d="M432.5 60.5H-0.5V89" stroke="#fff" fill="none"/><path d="M432.5 60.5V89.5H-1" stroke="#a0a0a0" fill="none"/><path d="M3.5 87V62.5H5" stroke="#fff" fill="none"/><path d="M5.5 62V87.5H3" stroke="#a0a0a0" fill="none"/><path d="M7.5 87V62.5H9" stroke="#fff" fill="none"/><path d="M9.5 62V87.5H7" stroke="#a0a0a0" fill="none"/><rect x="12" y="65" width="21" height="21" fill="url(#dith)"/><path d="M11.5 86V64.5H33" stroke="#a0a0a0" fill="none"/><path d="M32.5 65V85.5H12" stroke="#fff" fill="none"/><g transform="translate(15,68)"><path d="M0.5 1.5h13v11h-13z" fill="#fff" stroke="#000" stroke-width="1.3" /><rect x="0" y="1" width="14" height="2" fill="#000080"/><rect x="2" y="2" width="1" height="1" fill="#fff"/><path d="M5.500 8.500l1.500-2h3l1.500 2h4v6h-10z" fill="#ffff80" stroke="#000" stroke-width="1" /><path d="M6 10.500h9M6 12.500h9" stroke="#ffff00" stroke-width="1" fill="none" stroke-dasharray="1 1"/></g><g transform="translate(37,67)"><path d="M2.5 0.5h13v11h-13z" fill="#fff" stroke="#000" stroke-width="1.3" /><rect x="2" y="0" width="14" height="2" fill="#000080"/><path d="M1.500 14l7-8" stroke="#800000" stroke-width="2" fill="none" shape-rendering="geometricPrecision"/><path d="M1 14.500l6.500-7.500" stroke="#000" stroke-width="0.8" fill="none" shape-rendering="geometricPrecision"/><path d="M5 2.500l4-1.500l5 5l-2 1.500l-3-2l-2 1z" fill="#808000" stroke="#000" stroke-width="0.8" shape-rendering="geometricPrecision"/></g><g transform="translate(60,67)"><path d="M2.5 0.5h13v11h-13z" fill="#fff" stroke="#000" stroke-width="1.3" /><rect x="2" y="0" width="14" height="2" fill="#000080"/><path d="M5 3.500h3M10 3.500h2" stroke="#a0a0a0" stroke-width="1" fill="none" /><path d="M3 13l6-7M9 13l5-7M7 6.500h2M12 6.500h2" stroke="#000" stroke-width="1" fill="none" shape-rendering="geometricPrecision"/><circle cx="2.5" cy="13" r="1.7" fill="#00ffff" stroke="#000" stroke-width="1" shape-rendering="geometricPrecision"/><circle cx="8.5" cy="13" r="1.7" fill="#00ffff" stroke="#000" stroke-width="1" shape-rendering="geometricPrecision"/></g><g transform="translate(83,67)"><path d="M2.5 0.5h13v11h-13z" fill="#fff" stroke="#000" stroke-width="1.3" /><rect x="2" y="0" width="14" height="2" fill="#000080"/><path d="M5.500 7v-3h2M12.500 7v-3h-2M8.500 5.500h1" stroke="#000080" stroke-width="1" fill="none" /><path d="M1.500 8.500h4l2 2v4h-6z" fill="#fff" stroke="#000" stroke-width="1.3" /><path d="M10.500 8.500h4l2 2v4h-6z" fill="#fff" stroke="#000" stroke-width="1.3" /></g><g transform="translate(106,67)"><path d="M3.5 0.5h13v11h-13z" fill="#fff" stroke="#000" stroke-width="1.3" /><rect x="3" y="0" width="14" height="2" fill="#000080"/><path d="M6.500 2v9" stroke="#a0a0a0" stroke-width="1" fill="none" /><rect x="7" y="3" width="8" height="8" fill="url(#dith)"/><path d="M1.500 9.500h5v5h-5z" fill="#fff" stroke="#000" stroke-width="1.3" /><path d="M0 10.500h1M0 12.500h1M0 14h1" stroke="#000" stroke-width="1" fill="none" /></g><g transform="translate(129,67)"><path d="M1.500 5.500h11v9h-11z" fill="#fff" stroke="#000" stroke-width="1.3" /><path d="M3 9.500h2M6 9.500h5M3 12.500h2M6 12.500h5" stroke="#000" stroke-width="1.3" fill="none" /><path d="M3 5.500l5-4.500l5 5" fill="#fff" stroke="#000" stroke-width="1" shape-rendering="geometricPrecision"/><path d="M5 4l5 4M7 2l5 5M9 2l-5 5M11 3l-4 4" stroke="#000" stroke-width="0.6" fill="none" shape-rendering="geometricPrecision"/><path d="M13 1.500l3-1.500v6l-3-1.500z" fill="#000080" stroke="#000080" stroke-width="1" shape-rendering="geometricPrecision"/><path d="M10 3.500c1-2 3-2 4-1" stroke="#000" stroke-width="1" fill="none" shape-rendering="geometricPrecision"/></g><path d="M153.5 64V86" stroke="#a0a0a0" fill="none"/><path d="M154.5 64V86" stroke="#fff" fill="none"/><g transform="translate(160,67)"><path d="M1.500 8.500h4l2 2v4h-6z" fill="#fff" stroke="#000" stroke-width="1.3" /><path d="M9.500 8.500h4l2 2v4h-6z" fill="#fff" stroke="#000" stroke-width="1.3" /><path d="M5 1l6 6M11 1l-6 6" stroke="#000080" stroke-width="1" fill="none" shape-rendering="geometricPrecision"/><path d="M2 3.500l2.500-2M14 3.500l-2.500-2" stroke="#000" stroke-width="1" fill="none" shape-rendering="geometricPrecision" stroke-dasharray="1.500 1"/></g><g transform="translate(183,67)"><path d="M3 0.500h8l1.500 1.500v1.500l-1.500 1.500h-8l-1-1v-2.500z" fill="#ffffa0" stroke="#808000" stroke-width="1.3" shape-rendering="geometricPrecision"/><path d="M3 2.500h8" stroke="#fff" stroke-width="1" fill="none" stroke-dasharray="1 1"/><circle cx="12" cy="2.5" r="1.1" fill="#000" stroke="#000" stroke-width="0.5" shape-rendering="geometricPrecision"/><path d="M13 2.500l1.500 1.500v4.500h-11.500v2" stroke="#000" stroke-width="1.3" fill="none" shape-rendering="geometricPrecision"/><path d="M1.500 13.500h2l1-2h1.500M7 13.500h2l1-2h1.500M12.500 13.500h1.500l1-2" stroke="#000" stroke-width="1.2" fill="none" shape-rendering="geometricPrecision"/></g><g transform="translate(206,67)"><path d="M1.500 0.500h14v8l-3 3h-1l-1 1.500l-3 1.500l-1-1h-5z" fill="#fff" stroke="#000" stroke-width="1.3" /><path d="M4.500 1v13" stroke="#008000" stroke-width="1" fill="none" /><path d="M5 4.500h3M10 4.500h2M14 4.500h1.500M8.500 2v5M10.500 2v5M12.500 2v5M14.500 2v5" stroke="#000" stroke-width="1" fill="none" /></g><g transform="translate(229,67)"><path d="M1.500 0.500h14v14h-14z" fill="#f4f4f4" stroke="#a0a0a0" stroke-width="1" /><path d="M2 2.500h13" stroke="#a0a0a0" stroke-width="1" fill="none" /><path d="M5.500 1v1M11.500 1v1" stroke="#a0a0a0" stroke-width="1" fill="none" /><path d="M4.500 5.500h8v2h-8z" fill="#fff" stroke="#a0a0a0" stroke-width="1" /><path d="M3 10.500h2M6 10.500h7M3 12.500h2M6 12.500h7" stroke="#a0a0a0" stroke-width="1.3" fill="none" /></g><g transform="translate(252,67)"><path d="M1.500 0.500h14v14h-14z" fill="#fff" stroke="#000" stroke-width="1.6" /><path d="M2 2.500h13" stroke="#000" stroke-width="1" fill="none" /><path d="M12.500 1v1" stroke="#000" stroke-width="1" fill="none" /><text x="8.5" y="8" font-size="6.5" fill="#0000ff" font-weight="bold" text-anchor="middle" style="font-family:'Liberation Mono',monospace" textLength="11" lengthAdjust="spacingAndGlyphs">001</text><text x="8.5" y="13.5" font-size="6.5" fill="#0000ff" font-weight="bold" text-anchor="middle" style="font-family:'Liberation Mono',monospace" textLength="11" lengthAdjust="spacingAndGlyphs">002</text></g><path d="M276.5 64V86" stroke="#a0a0a0" fill="none"/><path d="M277.5 64V86" stroke="#fff" fill="none"/><g transform="translate(283,67)"><text x="8" y="8.5" font-size="12.5" fill="#a0a0a0" font-weight="bold" text-anchor="middle" style="font-family:'Liberation Serif',serif" textLength="13" lengthAdjust="spacingAndGlyphs">10</text><path d="M0.8 11.5v2.500M15.2 11.5v2.500" stroke="#a0a0a0" stroke-width="0.9" fill="none" shape-rendering="geometricPrecision"/><ellipse cx="4.6" cy="12.8" rx="2.200" ry="1.900" fill="none" stroke="#a0a0a0" stroke-width="0.900" shape-rendering="geometricPrecision"/><ellipse cx="10.6" cy="12.8" rx="2.400" ry="1.900" fill="none" stroke="#a0a0a0" stroke-width="0.900" shape-rendering="geometricPrecision"/><path d="M6.5 11.5h2.500M3.5 14l2-2.300M12.5 12.3l1.300-1.300" stroke="#a0a0a0" stroke-width="0.8" fill="none" shape-rendering="geometricPrecision"/></g><g transform="translate(306,67)"><text x="8" y="8.5" font-size="12.5" fill="#a0a0a0" font-weight="bold" text-anchor="middle" style="font-family:'Liberation Serif',serif" textLength="13" lengthAdjust="spacingAndGlyphs">10</text><path d="M0.8 11.5v2.500M15.2 11.5v2.500" stroke="#a0a0a0" stroke-width="0.9" fill="none" shape-rendering="geometricPrecision"/><ellipse cx="4.6" cy="12.8" rx="2.200" ry="1.900" fill="none" stroke="#a0a0a0" stroke-width="0.900" shape-rendering="geometricPrecision"/><ellipse cx="10.6" cy="12.8" rx="2.400" ry="1.900" fill="none" stroke="#a0a0a0" stroke-width="0.900" shape-rendering="geometricPrecision"/><path d="M6.5 11.5h2.500M3.5 14l2-2.300M12.5 12.3l1.300-1.300" stroke="#a0a0a0" stroke-width="0.8" fill="none" shape-rendering="geometricPrecision"/><path d="M0 8h14" stroke="#a0a0a0" stroke-width="1.6" fill="none" /><path d="M12 5.500l4 2.500l-4 2.500z" fill="#a0a0a0"  shape-rendering="geometricPrecision"/></g><rect x="327" y="65" width="21" height="21" fill="url(#dith)"/><path d="M326.5 86V64.5H348" stroke="#a0a0a0" fill="none"/><path d="M347.5 65V85.5H327" stroke="#fff" fill="none"/><g transform="translate(330,68)"><text x="8" y="8.5" font-size="12.5" fill="#a0a0a0" font-weight="bold" text-anchor="middle" style="font-family:'Liberation Serif',serif" textLength="13" lengthAdjust="spacingAndGlyphs">16</text><path d="M0.8 11.5v2.500M15.2 11.5v2.500" stroke="#a0a0a0" stroke-width="0.9" fill="none" shape-rendering="geometricPrecision"/><ellipse cx="4.6" cy="12.8" rx="2.200" ry="1.900" fill="none" stroke="#a0a0a0" stroke-width="0.900" shape-rendering="geometricPrecision"/><ellipse cx="10.6" cy="12.8" rx="2.400" ry="1.900" fill="none" stroke="#a0a0a0" stroke-width="0.900" shape-rendering="geometricPrecision"/><path d="M6.5 11.5h2.500M3.5 14l2-2.300M12.5 12.3l1.300-1.300" stroke="#a0a0a0" stroke-width="0.8" fill="none" shape-rendering="geometricPrecision"/></g><path d="M353.5 64V86" stroke="#a0a0a0" fill="none"/><path d="M354.5 64V86" stroke="#fff" fill="none"/><g transform="translate(360,67)"><path d="M6 0l5 5.500h-10z" fill="#a0a0a0"  shape-rendering="geometricPrecision"/><path d="M5 3.500h9v11.500h-9z" fill="#a0a0a0"  /><path d="M8 2l2 1.500h-2z" fill="#a0a0a0"  shape-rendering="geometricPrecision"/><path d="M14 5.500h2.500M14 8.500h2.500M3 12.500h2" stroke="#a0a0a0" stroke-width="1.3" fill="none" /></g><g transform="translate(383,67)"><path d="M2 0h5l3.500 3.500h4v11.500h-8v-4l-4.500-4.500h2.500z" fill="#a0a0a0"  shape-rendering="geometricPrecision"/><path d="M14.500 5.500h2M14.500 8.500h2M2 5.500h3M3.500 12.500h3" stroke="#a0a0a0" stroke-width="1.3" fill="none" /></g><g transform="translate(406,67)"><path d="M10.500 0h5v2h1v3.500h-1v2.500h-4.500v-2h-1v-3h0.500z" fill="#a0a0a0"  shape-rendering="geometricPrecision"/><rect x="3" y="0" width="6" height="10" fill="url(#dithg)"/><path d="M0 5.500h3M0 8.500h3" stroke="#a0a0a0" stroke-width="1.3" fill="none" /><path d="M0.8 11.5v2.500M15.2 11.5v2.500" stroke="#a0a0a0" stroke-width="0.9" fill="none" shape-rendering="geometricPrecision"/><ellipse cx="4.6" cy="12.8" rx="2.200" ry="1.900" fill="none" stroke="#a0a0a0" stroke-width="0.900" shape-rendering="geometricPrecision"/><ellipse cx="10.6" cy="12.8" rx="2.400" ry="1.900" fill="none" stroke="#a0a0a0" stroke-width="0.900" shape-rendering="geometricPrecision"/><path d="M6.5 11.5h2.500M3.5 14l2-2.300M12.5 12.3l1.300-1.300" stroke="#a0a0a0" stroke-width="0.8" fill="none" shape-rendering="geometricPrecision"/></g><path d="M766.5 60.5H433.5V89" stroke="#fff" fill="none"/><path d="M766.5 60.5V89.5H433" stroke="#a0a0a0" fill="none"/><path d="M437.5 87V62.5H439" stroke="#fff" fill="none"/><path d="M439.5 62V87.5H437" stroke="#a0a0a0" fill="none"/><path d="M441.5 87V62.5H443" stroke="#fff" fill="none"/><path d="M443.5 62V87.5H441" stroke="#a0a0a0" fill="none"/><g transform="translate(447,67)"><path d="M2.500 0.500h11l2 2v10l-2 2h-11l-2-2v-10z" fill="#fff" stroke="#000" stroke-width="1.5" shape-rendering="geometricPrecision"/><path d="M1 1.500l1.500-1h11l1.500 1.500v5h-14z" fill="#000"  shape-rendering="geometricPrecision"/><rect x="2" y="2" width="8" height="5" fill="#00ffff"/><rect x="4" y="8" width="1" height="1" fill="#0c0"/><rect x="2" y="10" width="1" height="3" fill="#000"/><path d="M3 13.500h10" stroke="#000" stroke-width="1" fill="none" /><path d="M8.500 5.500h6v4.500h-6z" fill="#ffff00" stroke="#000" stroke-width="1" /><path d="M10 5v-1.500l1-1h1l1 1v1.500" stroke="#ffff00" stroke-width="1.4" fill="none" shape-rendering="geometricPrecision"/><rect x="11" y="7" width="1" height="2" fill="#000"/></g><g transform="translate(470,67)"><path d="M4.500 1.500h10l2 1.500v7.500l-2 1h-10z" fill="#fff" stroke="#000" stroke-width="1.3" shape-rendering="geometricPrecision"/><rect x="5" y="1" width="11" height="3" fill="#000"/><rect x="7" y="5" width="7" height="5" fill="#c0c0c0"/><rect x="8" y="6" width="5" height="3" fill="#0000ff"/><rect x="9" y="7" width="1" height="1" fill="#fff"/><path d="M5.500 11.500h9l2-1.500v2l-2 2.500h-9z" fill="#fff" stroke="#000" stroke-width="1.2" shape-rendering="geometricPrecision"/><path d="M0.500 2.500h5.500v4.500h-5.500z" fill="#ffff00" stroke="#000" stroke-width="1" /><path d="M2 2v-1l1-1h1l1 1v1" stroke="#ffff00" stroke-width="1.4" fill="none" shape-rendering="geometricPrecision"/><rect x="3" y="4" width="1" height="2" fill="#000"/></g><path d="M495.5 64V86" stroke="#a0a0a0" fill="none"/><path d="M496.5 64V86" stroke="#fff" fill="none"/><g transform="translate(502,67)"><path d="M1.500 0.500h10v9h-10z" fill="#f4f4f4" stroke="#a0a0a0" stroke-width="1" /><path d="M2 3h7M2 6h5" stroke="#a0a0a0" stroke-width="2" fill="none" /><path d="M3 9.500v2.500h5" stroke="#a0a0a0" stroke-width="1" fill="none" /><path d="M8.500 4.500h7v6c0 2-2 4-3.500 4.500c-1.500-0.500-3.500-2.500-3.500-4.500z" fill="#f4f4f4" stroke="#a0a0a0" stroke-width="1.3" shape-rendering="geometricPrecision"/><path d="M10.500 10.500l3 3M13.500 10.500l-3 3" stroke="#a0a0a0" stroke-width="1" fill="none" shape-rendering="geometricPrecision"/></g><path d="M526.5 64V86" stroke="#a0a0a0" fill="none"/><path d="M527.5 64V86" stroke="#fff" fill="none"/><g transform="translate(533,67)"><path d="M3.500 9v-5.500c0-1.300 1.800-1.300 1.800 0v-2c0-1.300 1.800-1.300 1.800 0v-0.300c0-1.300 1.800-1.300 1.800 0v1c0-1.300 1.800-1.300 1.800 0v7.500c0 3-1.200 5-3.200 5h-2c-1.500 0-3.300-3.300-4.800-5.800c0-1.500 1.800-1.200 3 0.800z" fill="#f6f6f6" stroke="#a0a0a0" stroke-width="1.1" shape-rendering="geometricPrecision"/><path d="M5.300 3.500v4M7.100 2v5.500M8.900 2.500v5" stroke="#a0a0a0" stroke-width="0.9" fill="none" shape-rendering="geometricPrecision"/><path d="M7.500 10v3.500h-2.500" stroke="#a0a0a0" stroke-width="1.6" fill="none" /><path d="M12 9l3 2.500l-3 2.500z" fill="#a0a0a0"  shape-rendering="geometricPrecision"/></g><g transform="translate(556,67)"><path d="M3.500 9v-5.500c0-1.300 1.800-1.300 1.800 0v-2c0-1.300 1.800-1.300 1.800 0v-0.300c0-1.300 1.800-1.300 1.800 0v1c0-1.300 1.800-1.300 1.800 0v7.500c0 3-1.200 5-3.200 5h-2c-1.500 0-3.300-3.300-4.800-5.800c0-1.500 1.800-1.200 3 0.800z" fill="#f6f6f6" stroke="#a0a0a0" stroke-width="1.1" shape-rendering="geometricPrecision"/><path d="M5.300 3.500v4M7.100 2v5.500M8.900 2.500v5" stroke="#a0a0a0" stroke-width="0.9" fill="none" shape-rendering="geometricPrecision"/><path d="M5 6l2 2l2-2l2 2l-1 4h-4l-2-3z" fill="#a0a0a0"  shape-rendering="geometricPrecision"/><path d="M12 9l3 2.500l-3 2.500z" fill="#a0a0a0"  shape-rendering="geometricPrecision"/></g><g transform="translate(579,67)"><path d="M3 1l11 6.500l-11 6.500z" fill="#a0a0a0"  shape-rendering="geometricPrecision"/></g><g transform="translate(602,67)"><path d="M2 2h11v11h-11z" fill="#a0a0a0"  /><path d="M2 13.500h10" stroke="#a0a0a0" stroke-width="1" fill="none" /></g><g transform="translate(625,67)"><rect x="2" y="2" width="4" height="12" fill="#a0a0a0"/><rect x="8" y="2" width="4" height="12" fill="#a0a0a0"/></g><g transform="translate(648,67)"><path d="M1 1l9 6.500l-9 6.500z" fill="#a0a0a0"  shape-rendering="geometricPrecision"/><rect x="11" y="1" width="3" height="13" fill="#a0a0a0"/></g><g transform="translate(671,67)"><path d="M1 0l4 5v-5z" fill="#a0a0a0"  shape-rendering="geometricPrecision"/><rect x="5" y="0" width="2" height="9" fill="#a0a0a0"/><rect x="8" y="2" width="2" height="7" fill="#a0a0a0"/><path d="M4 8h9v6h-9z" fill="#a0a0a0"  /><path d="M10 4.500h4M10 6.500h4M2 10.500h3M11 11.500h3" stroke="#a0a0a0" stroke-width="1" fill="none" /></g><g transform="translate(694,67)"><path d="M4 3h9v11h-9z" fill="#a0a0a0"  /><path d="M1 5.500h3M1 8.500h3M1 11.500h3M12 12.500h3" stroke="#a0a0a0" stroke-width="1" fill="none" /><path d="M8 2l4 4v-5z" fill="#f0f0f0"  shape-rendering="geometricPrecision"/><rect x="12" y="0" width="2" height="10" fill="#a0a0a0"/><path d="M7 10l5-6" stroke="#f0f0f0" stroke-width="1.5" fill="none" shape-rendering="geometricPrecision"/></g><g transform="translate(717,67)"><path d="M1 1l7 6.500l-7 6.500z" fill="#a0a0a0"  shape-rendering="geometricPrecision"/><path d="M8 1l7 6.500l-7 6.500z" fill="#a0a0a0"  shape-rendering="geometricPrecision"/></g><g transform="translate(740,67)"><path d="M1 2l10 5.500l-10 5.500" stroke="#a0a0a0" stroke-width="2.6" fill="none" shape-rendering="geometricPrecision"/><rect x="12" y="1" width="3" height="13" fill="#a0a0a0"/></g><path d="M1023.5 60.5H767.5V89" stroke="#fff" fill="none"/><path d="M1023.5 60.5V89.5H767" stroke="#a0a0a0" fill="none"/><path d="M771.5 87V62.5H773" stroke="#fff" fill="none"/><path d="M773.5 62V87.5H771" stroke="#a0a0a0" fill="none"/><path d="M775.5 87V62.5H777" stroke="#fff" fill="none"/><path d="M777.5 62V87.5H775" stroke="#a0a0a0" fill="none"/><g transform="translate(782,67)"><rect x="2.5" y="5.5" width="10" height="5" fill="url(#dithg)" stroke="#a0a0a0" stroke-width="1"/><path d="M7.500 11v1" stroke="#a0a0a0" stroke-width="1" fill="none" /></g><g transform="translate(805,67)"><rect x="1.5" y="4.5" width="12" height="6" fill="url(#dithg)" stroke="#a0a0a0" stroke-width="1"/><path d="M7.500 11v1" stroke="#a0a0a0" stroke-width="1" fill="none" /></g><g transform="translate(828,67)"><rect x="2.5" y="5.5" width="10" height="5" fill="url(#dithg)" stroke="#a0a0a0" stroke-width="1"/><path d="M7.500 11v1M7.500 3v2" stroke="#a0a0a0" stroke-width="1" fill="none" /><path d="M5.500 2h4l-2 2z" fill="#a0a0a0"  shape-rendering="geometricPrecision"/></g><g transform="translate(851,67)"><rect x="2.5" y="5.5" width="10" height="5" fill="url(#dithg)" stroke="#a0a0a0" stroke-width="1"/><path d="M7.500 3v2M7.500 11v2M5 13.500h5" stroke="#a0a0a0" stroke-width="1" fill="none" /></g><g transform="translate(874,67)"><path d="M2 3.500h12M3 8.500h10M8 4v10" stroke="#a0a0a0" stroke-width="1.3" fill="none" /><path d="M2 2h12" stroke="#a0a0a0" stroke-width="1.6" fill="none" stroke-dasharray="1 1"/></g><g transform="translate(897,67)"><path d="M3 3.500h10M1 8.500h15M8 4v4M4.500 9v5M12.500 9v5M2 12.500h5M10 12.500h5" stroke="#a0a0a0" stroke-width="1.3" fill="none" /><path d="M3 2h10" stroke="#a0a0a0" stroke-width="1.6" fill="none" stroke-dasharray="1 1"/></g><g transform="translate(920,67)"><path d="M1 3.500h5M10 3.500h5M3.500 1v7M12.500 1v7M1 8.500h15M8 9v3M4 12.500h9" stroke="#a0a0a0" stroke-width="1.3" fill="none" /><path d="M4 14h9" stroke="#a0a0a0" stroke-width="1.6" fill="none" stroke-dasharray="1 1"/></g><g transform="translate(943,67)"><path d="M5 3.500h6M8 1v7M1 8.500h15M4.500 9v4M12.500 9v4M2 11.500h5M10 11.500h5" stroke="#a0a0a0" stroke-width="1.3" fill="none" /><path d="M2 13.5h5" stroke="#a0a0a0" stroke-width="1.6" fill="none" stroke-dasharray="1 1"/><path d="M10 13.5h5" stroke="#a0a0a0" stroke-width="1.6" fill="none" stroke-dasharray="1 1"/></g><g transform="translate(966,67)"><path d="M1 3.500h6M9 3.500h6M1 7.500h15M8 8v6M5 11.500h6M4.500 4v3M12.500 4v3" stroke="#a0a0a0" stroke-width="1.3" fill="none" /><path d="M1 2h6" stroke="#a0a0a0" stroke-width="1.6" fill="none" stroke-dasharray="1 1"/><path d="M9 2h6" stroke="#a0a0a0" stroke-width="1.6" fill="none" stroke-dasharray="1 1"/></g><path d="M990.5 64V86" stroke="#a0a0a0" fill="none"/><path d="M991.5 64V86" stroke="#fff" fill="none"/><g transform="translate(997,67)"><path d="M3.500 2v5.500h8v5.500" stroke="#a0a0a0" stroke-width="1.3" fill="none" /></g></svg><svg id="lp" width="370" height="580" viewBox="0 133 370 580" shape-rendering="crispEdges"><defs><pattern id="dl" width="2" height="2" patternUnits="userSpaceOnUse"><rect width="1" height="1" fill="#808080"/></pattern></defs><path d="M0 133.500H368" stroke="#a0a0a0" stroke-width="1" fill="none" /><path d="M0 134.500H368" stroke="#fff" stroke-width="1" fill="none" /><path d="M5 139.5H331" stroke="#fff" stroke-width="1" fill="none" /><path d="M5 141.5H331" stroke="#a0a0a0" stroke-width="1" fill="none" /><path d="M330.500 140V142" stroke="#a0a0a0" stroke-width="1" fill="none" /><path d="M5 143.5H331" stroke="#fff" stroke-width="1" fill="none" /><path d="M5 145.5H331" stroke="#a0a0a0" stroke-width="1" fill="none" /><path d="M330.500 144V146" stroke="#a0a0a0" stroke-width="1" fill="none" /><rect x="333" y="136" width="11" height="12" fill="#f0f0f0"/><path d="M333.5 147V136.5H343" stroke="#fff" stroke-width="1" fill="none" /><path d="M342.5 137V146.5H334" stroke="#a0a0a0" stroke-width="1" fill="none" /><path d="M343.5 136V147.5H333" stroke="#696969" stroke-width="1" fill="none" /><path d="M335 140.200h5.400l-2.700 3.200z" fill="#a0a0a0"  shape-rendering="geometricPrecision"/><rect x="346" y="136" width="11" height="12" fill="#f0f0f0"/><path d="M346.5 147V136.5H356" stroke="#fff" stroke-width="1" fill="none" /><path d="M355.5 137V146.5H347" stroke="#a0a0a0" stroke-width="1" fill="none" /><path d="M356.5 136V147.5H346" stroke="#696969" stroke-width="1" fill="none" /><path d="M348.500 140.300l5 4.500M353.500 140.300l-5 4.500" stroke="#000" stroke-width="1.8" fill="none" shape-rendering="geometricPrecision"/><rect x="5" y="152" width="352" height="538" fill="#fff"/><path d="M3.500 706V150.500H358" stroke="#a0a0a0" stroke-width="1" fill="none" /><path d="M4.500 706V151.500H357" stroke="#696969" stroke-width="1" fill="none" /><path d="M357.500 151V690" stroke="#e3e3e3" stroke-width="1" fill="none" /><path d="M358.500 150V691" stroke="#fff" stroke-width="1" fill="none" /><path d="M364.500 135V708" stroke="#fafafa" stroke-width="1" fill="none" /><path d="M5 689.500H357" stroke="#000" stroke-width="1" fill="none" /><rect x="5" y="690" width="352" height="16" fill="#f0f0f0"/><path d="M5 689l6 16.500h32l6-16.500z" fill="#f0f0f0"  /><path d="M5.500 689.500l6 16h31.500l5.500-16" stroke="#000" stroke-width="1" fill="none" shape-rendering="geometricPrecision"/><path d="M0 707.500H368" stroke="#a0a0a0" stroke-width="1" fill="none" /><path d="M0 708.500H368" stroke="#fff" stroke-width="1" fill="none" /><rect x="119" y="312" width="23" height="20" fill="#f0f0f0"/><path d="M18 162.5H24" stroke="#808080" stroke-width="1" fill="none" stroke-dasharray="1 1"/><path d="M32.5 171V177" stroke="#808080" stroke-width="1" fill="none" stroke-dasharray="1 1"/><path d="M37 182.5H43" stroke="#808080" stroke-width="1" fill="none" stroke-dasharray="1 1"/><path d="M51.5 191V358" stroke="#808080" stroke-width="1" fill="none" stroke-dasharray="1 1"/><path d="M52 202.5H62" stroke="#808080" stroke-width="1" fill="none" stroke-dasharray="1 1"/><path d="M52 222.5H62" stroke="#808080" stroke-width="1" fill="none" stroke-dasharray="1 1"/><path d="M52 242.5H62" stroke="#808080" stroke-width="1" fill="none" stroke-dasharray="1 1"/><path d="M56 262.5H62" stroke="#808080" stroke-width="1" fill="none" stroke-dasharray="1 1"/><path d="M56 362.5H62" stroke="#808080" stroke-width="1" fill="none" stroke-dasharray="1 1"/><path d="M70.5 271V278" stroke="#808080" stroke-width="1" fill="none" stroke-dasharray="1 1"/><path d="M75 282.5H81" stroke="#808080" stroke-width="1" fill="none" stroke-dasharray="1 1"/><path d="M89.5 291V343" stroke="#808080" stroke-width="1" fill="none" stroke-dasharray="1 1"/><path d="M90 302.5H100" stroke="#808080" stroke-width="1" fill="none" stroke-dasharray="1 1"/><path d="M90 322.5H100" stroke="#808080" stroke-width="1" fill="none" stroke-dasharray="1 1"/><path d="M90 342.5H100" stroke="#808080" stroke-width="1" fill="none" stroke-dasharray="1 1"/><path d="M70.5 371V443" stroke="#808080" stroke-width="1" fill="none" stroke-dasharray="1 1"/><path d="M71 382.5H81" stroke="#808080" stroke-width="1" fill="none" stroke-dasharray="1 1"/><path d="M71 402.5H81" stroke="#808080" stroke-width="1" fill="none" stroke-dasharray="1 1"/><path d="M71 422.5H81" stroke="#808080" stroke-width="1" fill="none" stroke-dasharray="1 1"/><path d="M71 442.5H81" stroke="#808080" stroke-width="1" fill="none" stroke-dasharray="1 1"/><path d="M9 158h8v8h-8z" fill="#fff" stroke="#808080" stroke-width="1" /><path d="M10.5 162h5" stroke="#000" stroke-width="1" fill="none" /><path d="M28 178h8v8h-8z" fill="#fff" stroke="#808080" stroke-width="1" /><path d="M29.5 182h5" stroke="#000" stroke-width="1" fill="none" /><path d="M47 258h8v8h-8z" fill="#fff" stroke="#808080" stroke-width="1" /><path d="M48.5 262h5" stroke="#000" stroke-width="1" fill="none" /><path d="M66 278h8v8h-8z" fill="#fff" stroke="#808080" stroke-width="1" /><path d="M67.5 282h5" stroke="#000" stroke-width="1" fill="none" /><path d="M47 358h8v8h-8z" fill="#fff" stroke="#808080" stroke-width="1" /><path d="M48.5 362h5" stroke="#000" stroke-width="1" fill="none" /><g transform="translate(24,154)"><path d="M5.500 4v1.500M2.500 6.500v-1h11v1M8 5.500v1M2.500 10v1.500h2.500v1M8 10v1.500h3v1" stroke="#000" stroke-width="1" fill="none" /><path d="M2.500 0.500h6v3h-6z" fill="#fff" stroke="#000" stroke-width="1" /><path d="M4 1.500h3" stroke="#000" stroke-width="1" fill="none" /><path d="M1.5 6.500h2l1 1v1l-1 1h-2l-1-1v-1z" fill="#fff" stroke="#000" stroke-width="1.1" shape-rendering="geometricPrecision"/><path d="M6.5 6.500h2l1 1v1l-1 1h-2l-1-1v-1z" fill="#fff" stroke="#000" stroke-width="1.1" shape-rendering="geometricPrecision"/><path d="M12.5 6.500h2l1 1v1l-1 1h-2l-1-1v-1z" fill="#fff" stroke="#000" stroke-width="1.1" shape-rendering="geometricPrecision"/><path d="M4 12.500h2l1 1l-1 1h-2l-1-1z" fill="#fff" stroke="#000" stroke-width="1.1" shape-rendering="geometricPrecision"/><path d="M10 12.500h2l1 1l-1 1h-2l-1-1z" fill="#fff" stroke="#000" stroke-width="1.1" shape-rendering="geometricPrecision"/></g><g transform="translate(43,174)"><path d="M0.500 5l2-2.500h13v8.500l-2 2.500h-13z" fill="#000" stroke="#000" stroke-width="1" /><rect x="2" y="4" width="11" height="1" fill="#c0c0c0"/><rect x="2" y="5" width="11" height="1" fill="#808080"/><rect x="14" y="3" width="1" height="1" fill="#fff"/><rect x="3" y="8" width="1" height="2" fill="#ff0000"/><rect x="5" y="8" width="1" height="2" fill="#ff0000"/><rect x="1" y="11" width="3" height="2" fill="#00e000"/><rect x="5" y="11" width="8" height="1" fill="#c0c0c0"/><rect x="5" y="12" width="8" height="1" fill="#808080"/></g><g transform="translate(62,194)"><path d="M3 1.500h8l1.500 1.500v1.500l-1.500 1.500h-8l-1-1v-2.500z" fill="#ffffa0" stroke="#808000" stroke-width="1.3" shape-rendering="geometricPrecision"/><path d="M3 3.500h8" stroke="#fff" stroke-width="1" fill="none" stroke-dasharray="1 1"/><circle cx="12" cy="3.5" r="1.1" fill="#000" stroke="#000" stroke-width="0.5" shape-rendering="geometricPrecision"/><path d="M13 3.500l1.500 1.500v4.500h-11.500" stroke="#000" stroke-width="1.3" fill="none" shape-rendering="geometricPrecision"/><path d="M4 10.500v2l-1.500 1.500" stroke="#000" stroke-width="1.2" fill="none" shape-rendering="geometricPrecision"/><path d="M9.5 10.500v2l-1.500 1.500" stroke="#000" stroke-width="1.2" fill="none" shape-rendering="geometricPrecision"/><path d="M14.5 10.500v2l-1.500 1.500" stroke="#000" stroke-width="1.2" fill="none" shape-rendering="geometricPrecision"/></g><g transform="translate(62,214)"><path d="M3.500 0.500h9l1.500 1.500v11l-1.500 1.500h-9l-1.500-1.500v-11z" fill="#fff" stroke="#000" stroke-width="1.2" shape-rendering="geometricPrecision"/><path d="M4 2.500h9" stroke="#000" stroke-width="1" fill="none" stroke-dasharray="1 1"/><path d="M4 5.500h2M7 5.500h4M4 8.500h2M4 11.500h2" stroke="#a0a0a0" stroke-width="1" fill="none" /><circle cx="9.5" cy="9.5" r="2.4" fill="#ffff00" stroke="#000" stroke-width="1.3" shape-rendering="geometricPrecision"/><rect x="9" y="9" width="1" height="1" fill="#000"/></g><g transform="translate(62,234)"><path d="M0 8.500l11.500-6.500l4.500 3.500l-11.500 7z" fill="#a0a0a0" stroke="#808080" stroke-width="1" shape-rendering="geometricPrecision"/><path d="M6 12.500v2M8 11.500v2M10 10v2.500M12 9v2M14 7.500v2" stroke="#000" stroke-width="1.3" fill="none" shape-rendering="geometricPrecision"/></g><g transform="translate(62,254)"><path d="M0 2l10-2l6 12l-10 2.500z" fill="#ffff00" stroke="#000" stroke-width="1" shape-rendering="geometricPrecision"/><path d="M2 1.500l6 12.500M5 1l6 12.500M8 0.500l6 12M1 4l10-2M2.500 7l10-2M4 10l10-2M5.500 13l10-2.500" stroke="#000" stroke-width="1.2" fill="none" shape-rendering="geometricPrecision"/></g><g transform="translate(81,274)"><ellipse cx="7.500" cy="4.500" rx="7" ry="4" fill="#fff" stroke="#000" stroke-width="1.300" shape-rendering="geometricPrecision"/><path d="M7.500 0v1.500M0.500 4l1.500 1M14.500 4l-1.500 1" stroke="#000" stroke-width="1" fill="none" shape-rendering="geometricPrecision"/><path d="M4 8l2.500-1.500l2 1.500l2-1.500l3 1.500l-1.500 2.500l2 2l-3 1l-1 2l-2.500-1.500l-2.500 1l-0.500-2.500l-2.500-1.500l2.500-1.500z" fill="#ffff00" stroke="#000" stroke-width="1" shape-rendering="geometricPrecision"/><path d="M6 8l6 6M11 8l-5 6M5 11h9" stroke="#000" stroke-width="1" fill="none" shape-rendering="geometricPrecision"/><rect x="8" y="7" width="2" height="3" fill="#fff"/></g><g transform="translate(100,294)"><path d="M3 1.500h8l1.500 1.500v1.500l-1.500 1.500h-8l-1-1v-2.500z" fill="#ffffa0" stroke="#808000" stroke-width="1.3" shape-rendering="geometricPrecision"/><path d="M3 3.500h8" stroke="#fff" stroke-width="1" fill="none" stroke-dasharray="1 1"/><circle cx="12" cy="3.5" r="1.1" fill="#000" stroke="#000" stroke-width="0.5" shape-rendering="geometricPrecision"/><path d="M13 3.500l1.500 1.500v4.500h-11.500" stroke="#000" stroke-width="1.3" fill="none" shape-rendering="geometricPrecision"/><path d="M4 10.500v2l-1.500 1.500" stroke="#000" stroke-width="1.2" fill="none" shape-rendering="geometricPrecision"/><path d="M9.5 10.500v2l-1.500 1.500" stroke="#000" stroke-width="1.2" fill="none" shape-rendering="geometricPrecision"/><path d="M14.5 10.500v2l-1.500 1.500" stroke="#000" stroke-width="1.2" fill="none" shape-rendering="geometricPrecision"/></g><g transform="translate(100,314)"><path d="M1.500 3.500l2-2h8l2 2v5l-3 3h-6l-3-3z" fill="#ffff00" stroke="#000" stroke-width="1.4" shape-rendering="geometricPrecision"/><ellipse cx="7.500" cy="3.500" rx="4.500" ry="1.300" fill="#808000" stroke="#000" stroke-width="0.800" shape-rendering="geometricPrecision"/><path d="M3 6.500h9M5.500 6.500v4M9.500 6.500v4M7.500 8v2" stroke="#000" stroke-width="1.2" fill="none" shape-rendering="geometricPrecision"/><path d="M5.500 11.500h4v2l-1 1h-2l-1-1z" fill="#ffff00" stroke="#000" stroke-width="1.2" shape-rendering="geometricPrecision"/></g><g transform="translate(100,334)"><path d="M1.500 3.500l2-2h8l2 2v5l-3 3h-6l-3-3z" fill="#ffff00" stroke="#000" stroke-width="1.4" shape-rendering="geometricPrecision"/><ellipse cx="7.500" cy="3.500" rx="4.500" ry="1.300" fill="#808000" stroke="#000" stroke-width="0.800" shape-rendering="geometricPrecision"/><path d="M3 6.500h9M5.500 6.500v4M9.500 6.500v4M7.500 8v2" stroke="#000" stroke-width="1.2" fill="none" shape-rendering="geometricPrecision"/><path d="M5.500 11.500h4v2l-1 1h-2l-1-1z" fill="#ffff00" stroke="#000" stroke-width="1.2" shape-rendering="geometricPrecision"/></g><g transform="translate(62,354)"><path d="M4.500 1.500h8v13.500h-8z" fill="#c0c0c0" stroke="#000" stroke-width="1.5" /><path d="M1 4.500h3.500M1 7.500h3.500M1 10.500h3.500M1 13.500h3.500M12.500 4.500h3.500M12.500 7.500h3.500M12.500 10.500h3.500" stroke="#000" stroke-width="1.4" fill="none" /></g><g transform="translate(81,374)"><path d="M4.500 2.500h8.500v12h-8.500z" fill="#000"  /><path d="M13.500 3v11.500" stroke="#a0a0a0" stroke-width="1" fill="none" /><path d="M14 4.500h2.500M14 7.500h2.500" stroke="#808080" stroke-width="1.3" fill="none" /><path d="M1.500 5v-2.500l1.500-1.500h1.500l1.500 1.500v2.500" stroke="#808000" stroke-width="1.5" fill="none" shape-rendering="geometricPrecision"/><path d="M2.500 4.500v-1.500l1-1h0.500l1 1v1.500" stroke="#fff" stroke-width="0.8" fill="none" shape-rendering="geometricPrecision"/><path d="M0.500 4.500h7v5.500h-7z" fill="#ffff00" stroke="#808000" stroke-width="1.3" /><path d="M3 7.500h2" stroke="#000" stroke-width="1.6" fill="none" /><path d="M1.500 6.500h1M5.500 6.500h1" stroke="#fff" stroke-width="1" fill="none" /></g><g transform="translate(81,394)"><path d="M4.500 2.500h8.500v12h-8.500z" fill="#000"  /><path d="M13.500 3v11.500" stroke="#a0a0a0" stroke-width="1" fill="none" /><path d="M14 4.500h2.500M14 7.500h2.500" stroke="#808080" stroke-width="1.3" fill="none" /><path d="M1.500 5v-2.500l1.500-1.500h1.500l1.500 1.500v2.500" stroke="#808000" stroke-width="1.5" fill="none" shape-rendering="geometricPrecision"/><path d="M2.500 4.500v-1.500l1-1h0.500l1 1v1.500" stroke="#fff" stroke-width="0.8" fill="none" shape-rendering="geometricPrecision"/><path d="M0.500 4.500h7v5.500h-7z" fill="#ffff00" stroke="#808000" stroke-width="1.3" /><path d="M3 7.500h2" stroke="#000" stroke-width="1.6" fill="none" /><path d="M1.500 6.500h1M5.500 6.500h1" stroke="#fff" stroke-width="1" fill="none" /></g><g transform="translate(81,414)"><path d="M4.500 2.500h8.500v12h-8.500z" fill="#000"  /><path d="M13.500 3v11.500" stroke="#a0a0a0" stroke-width="1" fill="none" /><path d="M14 4.500h2.500M14 7.500h2.500" stroke="#808080" stroke-width="1.3" fill="none" /><path d="M1.500 5v-2.500l1.500-1.500h1.500l1.500 1.500v2.500" stroke="#808000" stroke-width="1.5" fill="none" shape-rendering="geometricPrecision"/><path d="M2.500 4.500v-1.500l1-1h0.500l1 1v1.500" stroke="#fff" stroke-width="0.8" fill="none" shape-rendering="geometricPrecision"/><path d="M0.500 4.500h7v5.500h-7z" fill="#ffff00" stroke="#808000" stroke-width="1.3" /><path d="M3 7.500h2" stroke="#000" stroke-width="1.6" fill="none" /><path d="M1.500 6.500h1M5.500 6.500h1" stroke="#fff" stroke-width="1" fill="none" /></g><g transform="translate(81,434)"><path d="M4.500 2.500h8.500v12h-8.500z" fill="#000"  /><path d="M13.500 3v11.500" stroke="#a0a0a0" stroke-width="1" fill="none" /><path d="M14 4.500h2.500M14 7.500h2.500" stroke="#808080" stroke-width="1.3" fill="none" /><path d="M1.500 5v-2.500l1.500-1.500h1.500l1.500 1.500v2.500" stroke="#808000" stroke-width="1.5" fill="none" shape-rendering="geometricPrecision"/><path d="M2.500 4.500v-1.500l1-1h0.500l1 1v1.500" stroke="#fff" stroke-width="0.8" fill="none" shape-rendering="geometricPrecision"/><path d="M0.500 4.500h7v5.500h-7z" fill="#ffff00" stroke="#808000" stroke-width="1.3" /><path d="M3 7.500h2" stroke="#000" stroke-width="1.6" fill="none" /><path d="M1.500 6.500h1M5.500 6.500h1" stroke="#fff" stroke-width="1" fill="none" /></g></svg><span class="tx" style="left:45px;top:153px;line-height:18px;font-size:12px;">新工程</span><span class="tx" style="left:64px;top:173px;line-height:18px;font-size:12px;letter-spacing:-0.002px;">新PLC1[CP1H-E] 离线</span><span class="tx" style="left:83px;top:193px;line-height:18px;font-size:12px;">符号</span><span class="tx" style="left:83px;top:213px;line-height:18px;font-size:12px;">设置</span><span class="tx" style="left:83px;top:233px;line-height:18px;font-size:12px;">内存</span><span class="tx" style="left:83px;top:253px;line-height:18px;font-size:12px;">程序</span><span class="tx" style="left:102px;top:273px;line-height:18px;font-size:12px;letter-spacing:0.293px;">新程序1 (00)</span><span class="tx" style="left:121px;top:293px;line-height:18px;font-size:12px;">符号</span><span class="tx" style="left:121px;top:313px;line-height:18px;font-size:12px;letter-spacing:0.156px;">段1</span><span class="tx" style="left:121px;top:333px;line-height:18px;font-size:12px;letter-spacing:0.219px;">END</span><span class="tx" style="left:83px;top:353px;line-height:18px;font-size:12px;">功能块</span><span class="tx" style="left:102px;top:373px;line-height:18px;font-size:12px;letter-spacing:-0.594px;">CP_ST_CLink</span><span class="tx" style="left:102px;top:393px;line-height:18px;font-size:12px;letter-spacing:-0.670px;">CP_ST_Recv</span><span class="tx" style="left:102px;top:413px;line-height:18px;font-size:12px;letter-spacing:-0.589px;">CP_ST_Send</span><span class="tx" style="left:102px;top:433px;line-height:18px;font-size:12px;letter-spacing:-0.580px;">CP_ST_SLink</span><span class="tx" style="left:15px;top:690px;line-height:16px;font-size:12px;">工程</span><svg id="ld" width="998" height="558" viewBox="368 133 998 558" shape-rendering="crispEdges"><defs><pattern id="trk" width="2" height="2" patternUnits="userSpaceOnUse"><rect width="2" height="2" fill="#fff"/><rect width="1" height="1" fill="#f0f0f0"/><rect x="1" y="1" width="1" height="1" fill="#f0f0f0"/></pattern></defs><path d="M368 133.500H1366" stroke="#a0a0a0" stroke-width="1" fill="none" /><path d="M368.500 134V689" stroke="#a0a0a0" stroke-width="1" fill="none" /><path d="M369 134.500H1365" stroke="#696969" stroke-width="1" fill="none" /><path d="M369.500 135V688" stroke="#696969" stroke-width="1" fill="none" /><path d="M1365.500 134V690" stroke="#fff" stroke-width="1" fill="none" /><path d="M1364.500 135V689" stroke="#e3e3e3" stroke-width="1" fill="none" /><path d="M369 688.500H1365" stroke="#e3e3e3" stroke-width="1" fill="none" /><path d="M368 689.500H1366" stroke="#fff" stroke-width="1" fill="none" /><rect x="424" y="135" width="923" height="536" fill="#fff"/><rect x="370" y="135" width="54" height="536" fill="#f0f0f0"/><path d="M418.500 135V671" stroke="#a0a0a0" stroke-width="1" fill="none" /><path d="M370 175.5H418" stroke="#a0a0a0" stroke-width="1" fill="none" /><path d="M370 176.5H418" stroke="#fff" stroke-width="1" fill="none" /><path d="M370 648.5H418" stroke="#a0a0a0" stroke-width="1" fill="none" /><path d="M370 649.5H418" stroke="#fff" stroke-width="1" fill="none" /><text class="nm" x="373" y="188">1</text><text class="nm" x="404" y="200">3</text><text class="nm" x="373" y="661">2</text><text class="nm" x="404" y="673">6</text><path d="M424 177.5H1347" stroke="#e0e0e0" stroke-width="1" fill="none" /><path d="M424 650.5H1347" stroke="#e0e0e0" stroke-width="1" fill="none" /><path d="M423 135.5h3M424.5 134v3M525 135.5h3M526.5 134v3M627 135.5h3M628.5 134v3M729 135.5h3M730.5 134v3M831 135.5h3M832.5 134v3M933 135.5h3M934.5 134v3M1035 135.5h3M1036.5 134v3M1137 135.5h3M1138.5 134v3M1239 135.5h3M1240.5 134v3M1341 135.5h3M1342.5 134v3M423 178.5h3M424.5 177v3M525 178.5h3M526.5 177v3M627 178.5h3M628.5 177v3M729 178.5h3M730.5 177v3M831 178.5h3M832.5 177v3M933 178.5h3M934.5 177v3M1035 178.5h3M1036.5 177v3M1137 178.5h3M1138.5 177v3M1239 178.5h3M1240.5 177v3M1341 178.5h3M1342.5 177v3M423 221.5h3M424.5 220v3M525 221.5h3M526.5 220v3M627 221.5h3M628.5 220v3M729 221.5h3M730.5 220v3M831 221.5h3M832.5 220v3M933 221.5h3M934.5 220v3M1035 221.5h3M1036.5 220v3M1137 221.5h3M1138.5 220v3M1239 221.5h3M1240.5 220v3M1341 221.5h3M1342.5 220v3M423 264.5h3M424.5 263v3M525 264.5h3M526.5 263v3M627 264.5h3M628.5 263v3M729 264.5h3M730.5 263v3M831 264.5h3M832.5 263v3M933 264.5h3M934.5 263v3M1035 264.5h3M1036.5 263v3M1137 264.5h3M1138.5 263v3M1239 264.5h3M1240.5 263v3M1341 264.5h3M1342.5 263v3M423 307.5h3M424.5 306v3M525 307.5h3M526.5 306v3M627 307.5h3M628.5 306v3M729 307.5h3M730.5 306v3M831 307.5h3M832.5 306v3M933 307.5h3M934.5 306v3M1035 307.5h3M1036.5 306v3M1137 307.5h3M1138.5 306v3M1239 307.5h3M1240.5 306v3M1341 307.5h3M1342.5 306v3M423 350.5h3M424.5 349v3M525 350.5h3M526.5 349v3M627 350.5h3M628.5 349v3M729 350.5h3M730.5 349v3M831 350.5h3M832.5 349v3M933 350.5h3M934.5 349v3M1035 350.5h3M1036.5 349v3M1137 350.5h3M1138.5 349v3M1239 350.5h3M1240.5 349v3M1341 350.5h3M1342.5 349v3M423 393.5h3M424.5 392v3M525 393.5h3M526.5 392v3M627 393.5h3M628.5 392v3M729 393.5h3M730.5 392v3M831 393.5h3M832.5 392v3M933 393.5h3M934.5 392v3M1035 393.5h3M1036.5 392v3M1137 393.5h3M1138.5 392v3M1239 393.5h3M1240.5 392v3M1341 393.5h3M1342.5 392v3M423 436.5h3M424.5 435v3M525 436.5h3M526.5 435v3M627 436.5h3M628.5 435v3M729 436.5h3M730.5 435v3M831 436.5h3M832.5 435v3M933 436.5h3M934.5 435v3M1035 436.5h3M1036.5 435v3M1137 436.5h3M1138.5 435v3M1239 436.5h3M1240.5 435v3M1341 436.5h3M1342.5 435v3M423 479.5h3M424.5 478v3M525 479.5h3M526.5 478v3M627 479.5h3M628.5 478v3M729 479.5h3M730.5 478v3M831 479.5h3M832.5 478v3M933 479.5h3M934.5 478v3M1035 479.5h3M1036.5 478v3M1137 479.5h3M1138.5 478v3M1239 479.5h3M1240.5 478v3M1341 479.5h3M1342.5 478v3M423 522.5h3M424.5 521v3M525 522.5h3M526.5 521v3M627 522.5h3M628.5 521v3M729 522.5h3M730.5 521v3M831 522.5h3M832.5 521v3M933 522.5h3M934.5 521v3M1035 522.5h3M1036.5 521v3M1137 522.5h3M1138.5 521v3M1239 522.5h3M1240.5 521v3M1341 522.5h3M1342.5 521v3M423 565.5h3M424.5 564v3M525 565.5h3M526.5 564v3M627 565.5h3M628.5 564v3M729 565.5h3M730.5 564v3M831 565.5h3M832.5 564v3M933 565.5h3M934.5 564v3M1035 565.5h3M1036.5 564v3M1137 565.5h3M1138.5 564v3M1239 565.5h3M1240.5 564v3M1341 565.5h3M1342.5 564v3M423 608.5h3M424.5 607v3M525 608.5h3M526.5 607v3M627 608.5h3M628.5 607v3M729 608.5h3M730.5 607v3M831 608.5h3M832.5 607v3M933 608.5h3M934.5 607v3M1035 608.5h3M1036.5 607v3M1137 608.5h3M1138.5 607v3M1239 608.5h3M1240.5 607v3M1341 608.5h3M1342.5 607v3M423 651.5h3M424.5 650v3M525 651.5h3M526.5 650v3M627 651.5h3M628.5 650v3M729 651.5h3M730.5 650v3M831 651.5h3M832.5 650v3M933 651.5h3M934.5 650v3M1035 651.5h3M1036.5 650v3M1137 651.5h3M1138.5 650v3M1239 651.5h3M1240.5 650v3M1341 651.5h3M1342.5 650v3" stroke="#dcdcdc" stroke-width="1" fill="none" /><path d="M423.500 135V671" stroke="#1e8c1e" stroke-width="1" fill="none" /><path d="M1137.500 135V671" stroke="#1e8c1e" stroke-width="1" fill="none" /><path d="M1040.500 135V172.500H1133.500V135" stroke="#000" stroke-width="1" fill="none" /><path d="M1072 135.500H1102" stroke="#000" stroke-width="1" fill="none" /><text x="1074" y="146" textLength="24" lengthAdjust="spacingAndGlyphs">&amp;64<tspan class="z">0</tspan></text><text class="cj" x="1147" y="146.500">位数</text><path d="M424 240.500H469M482 240.500H632M469.500 234V247M481.500 234V247" stroke="#000" stroke-width="1" fill="none" /><text x="463" y="231" textLength="24" lengthAdjust="spacingAndGlyphs">P<tspan class="u">_</tspan>On</text><text class="cj" x="450.300" y="257.500" style="fill:#0a72da">常通标志</text><path d="M632.500 190.500H827.500V650.500H632.500Z" stroke="#000" stroke-width="1" fill="none" /><text x="700" y="188" textLength="60" lengthAdjust="spacingAndGlyphs">ClientLink</text><text x="697" y="209" textLength="66" lengthAdjust="spacingAndGlyphs">CP<tspan class="u">_</tspan>ST<tspan class="u">_</tspan>CLink</text><text x="703.5" y="240" textLength="54" lengthAdjust="spacingAndGlyphs">guanyumou</text><text x="635" y="232" textLength="36" lengthAdjust="spacingAndGlyphs">(BOOL)</text><text x="635" y="241" textLength="12" lengthAdjust="spacingAndGlyphs">EN</text><text x="635" y="275" textLength="36" lengthAdjust="spacingAndGlyphs">(BOOL)</text><text x="635" y="284" textLength="42" lengthAdjust="spacingAndGlyphs">Execute</text><path d="M628 283.5H632" stroke="#000" stroke-width="1" fill="none" /><text x="562" y="275" textLength="30" lengthAdjust="spacingAndGlyphs">W<tspan class="z">0</tspan>.<tspan class="z">0</tspan><tspan class="z">0</tspan></text><text x="635" y="318" textLength="36" lengthAdjust="spacingAndGlyphs">(UINT)</text><text x="635" y="327" textLength="36" lengthAdjust="spacingAndGlyphs">UnitNo</text><path d="M628 326.5H632" stroke="#000" stroke-width="1" fill="none" /><text x="562" y="318" textLength="30" lengthAdjust="spacingAndGlyphs">#FFF<tspan class="z">0</tspan></text><text x="635" y="361" textLength="36" lengthAdjust="spacingAndGlyphs">(UINT)</text><text x="635" y="370" textLength="48" lengthAdjust="spacingAndGlyphs">SocketNo</text><path d="M628 369.5H632" stroke="#000" stroke-width="1" fill="none" /><text x="571" y="361" textLength="12" lengthAdjust="spacingAndGlyphs">&amp;1</text><text x="635" y="404" textLength="36" lengthAdjust="spacingAndGlyphs">(UINT)</text><text x="635" y="413" textLength="42" lengthAdjust="spacingAndGlyphs">IPaddr1</text><path d="M628 412.5H632" stroke="#000" stroke-width="1" fill="none" /><text x="565" y="404" textLength="24" lengthAdjust="spacingAndGlyphs">&amp;192</text><text x="635" y="447" textLength="36" lengthAdjust="spacingAndGlyphs">(UINT)</text><text x="635" y="456" textLength="42" lengthAdjust="spacingAndGlyphs">IPaddr2</text><path d="M628 455.5H632" stroke="#000" stroke-width="1" fill="none" /><text x="565" y="447" textLength="24" lengthAdjust="spacingAndGlyphs">&amp;168</text><text x="635" y="490" textLength="36" lengthAdjust="spacingAndGlyphs">(UINT)</text><text x="635" y="499" textLength="42" lengthAdjust="spacingAndGlyphs">IPaddr3</text><path d="M628 498.5H632" stroke="#000" stroke-width="1" fill="none" /><text x="571" y="490" textLength="12" lengthAdjust="spacingAndGlyphs">&amp;1</text><text x="635" y="533" textLength="36" lengthAdjust="spacingAndGlyphs">(UINT)</text><text x="635" y="542" textLength="42" lengthAdjust="spacingAndGlyphs">IPaddr4</text><path d="M628 541.5H632" stroke="#000" stroke-width="1" fill="none" /><text x="568" y="533" textLength="18" lengthAdjust="spacingAndGlyphs">&amp;71</text><text x="635" y="576" textLength="36" lengthAdjust="spacingAndGlyphs">(UINT)</text><text x="635" y="585" textLength="42" lengthAdjust="spacingAndGlyphs">RemPort</text><path d="M628 584.5H632" stroke="#000" stroke-width="1" fill="none" /><text x="562" y="576" textLength="30" lengthAdjust="spacingAndGlyphs">&amp;4<tspan class="z">0</tspan>96</text><text x="635" y="619" textLength="36" lengthAdjust="spacingAndGlyphs">(UINT)</text><text x="635" y="628" textLength="42" lengthAdjust="spacingAndGlyphs">LocPort</text><path d="M628 627.5H632" stroke="#000" stroke-width="1" fill="none" /><text x="562" y="619" textLength="30" lengthAdjust="spacingAndGlyphs">&amp;4<tspan class="z">0</tspan>96</text><text x="788.5" y="232" textLength="36" lengthAdjust="spacingAndGlyphs">(BOOL)</text><text x="806.5" y="241" textLength="18" lengthAdjust="spacingAndGlyphs">ENO</text><text x="788.5" y="275" textLength="36" lengthAdjust="spacingAndGlyphs">(BOOL)</text><text x="800.5" y="284" textLength="24" lengthAdjust="spacingAndGlyphs">Done</text><path d="M828 283.5H832" stroke="#000" stroke-width="1" fill="none" /><text x="868" y="275" textLength="30" lengthAdjust="spacingAndGlyphs">W<tspan class="z">0</tspan>.<tspan class="z">0</tspan>2</text><text x="788.5" y="318" textLength="36" lengthAdjust="spacingAndGlyphs">(BOOL)</text><text x="800.5" y="327" textLength="24" lengthAdjust="spacingAndGlyphs">Wait</text><path d="M828 326.5H832" stroke="#000" stroke-width="1" fill="none" /><text x="868" y="318" textLength="30" lengthAdjust="spacingAndGlyphs">W<tspan class="z">0</tspan>.<tspan class="z">0</tspan>3</text><text x="788.5" y="361" textLength="36" lengthAdjust="spacingAndGlyphs">(BOOL)</text><text x="800.5" y="370" textLength="24" lengthAdjust="spacingAndGlyphs">Link</text><path d="M828 369.5H832" stroke="#000" stroke-width="1" fill="none" /><text x="868" y="361" textLength="30" lengthAdjust="spacingAndGlyphs">W<tspan class="z">0</tspan>.<tspan class="z">0</tspan>4</text><text x="788.5" y="404" textLength="36" lengthAdjust="spacingAndGlyphs">(BOOL)</text><text x="794.5" y="413" textLength="30" lengthAdjust="spacingAndGlyphs">Error</text><path d="M828 412.5H832" stroke="#000" stroke-width="1" fill="none" /><text x="868" y="404" textLength="30" lengthAdjust="spacingAndGlyphs">W<tspan class="z">0</tspan>.<tspan class="z">0</tspan>5</text><text x="788.5" y="447" textLength="36" lengthAdjust="spacingAndGlyphs">(UINT)</text><text x="788.5" y="456" textLength="36" lengthAdjust="spacingAndGlyphs">Status</text><path d="M828 455.5H832" stroke="#000" stroke-width="1" fill="none" /><text x="877" y="447" textLength="12" lengthAdjust="spacingAndGlyphs">D<tspan class="z">0</tspan></text><text x="788.5" y="490" textLength="36" lengthAdjust="spacingAndGlyphs">(UINT)</text><text x="776.5" y="499" textLength="48" lengthAdjust="spacingAndGlyphs">Instance</text><path d="M828 498.5H832" stroke="#000" stroke-width="1" fill="none" /><text x="877" y="490" textLength="12" lengthAdjust="spacingAndGlyphs">D1</text><path d="M828 240.500H1081M1093 240.500H1137M1136.500 236V244" stroke="#000" stroke-width="1" fill="none" /><circle cx="1087" cy="240.5" r="6" fill="#fff" stroke="#000" stroke-width="1" shape-rendering="geometricPrecision"/><text x="1072" y="231" textLength="30" lengthAdjust="spacingAndGlyphs">W<tspan class="z">0</tspan>.<tspan class="z">0</tspan>1</text><text x="463" y="661" textLength="24" lengthAdjust="spacingAndGlyphs">P<tspan class="u">_</tspan>On</text><text x="562" y="661" textLength="30" lengthAdjust="spacingAndGlyphs">W<tspan class="z">0</tspan>.<tspan class="z">0</tspan>2</text><path d="M424 670.500H469M482 670.500H571M584 670.500H1040M469.500 664V671M481.500 664V671M571.500 664V671M583.500 664V671" stroke="#000" stroke-width="1" fill="none" /><path d="M577.500 665V671M575.500 667.500l2-2.500l2 2.500" stroke="#000" stroke-width="1" fill="none" shape-rendering="geometricPrecision"/><path d="M1040.500 671V664.500H1133.500V671M1133 670.500H1137" stroke="#000" stroke-width="1" fill="none" /><rect x="1347" y="135" width="17" height="536" fill="url(#trk)"/><rect x="1347" y="135" width="17" height="6" fill="#f0f0f0"/><path d="M1347.5 140V135.5H1363" stroke="#fff" stroke-width="1" fill="none" /><path d="M1362.5 136V139.5H1348" stroke="#a0a0a0" stroke-width="1" fill="none" /><path d="M1363.5 135V140.5H1347" stroke="#696969" stroke-width="1" fill="none" /><rect x="1347" y="141" width="17" height="17" fill="#f0f0f0"/><path d="M1347.5 157V141.5H1363" stroke="#fff" stroke-width="1" fill="none" /><path d="M1362.5 142V156.5H1348" stroke="#a0a0a0" stroke-width="1" fill="none" /><path d="M1363.5 141V157.5H1347" stroke="#696969" stroke-width="1" fill="none" /><path d="M1351.500 152h8l-4-4z" fill="#000"  /><rect x="1347" y="190" width="17" height="31" fill="#f0f0f0"/><path d="M1347.5 220V190.5H1363" stroke="#fff" stroke-width="1" fill="none" /><path d="M1362.5 191V219.5H1348" stroke="#a0a0a0" stroke-width="1" fill="none" /><path d="M1363.5 190V220.5H1347" stroke="#696969" stroke-width="1" fill="none" /><rect x="1347" y="654" width="17" height="17" fill="#f0f0f0"/><path d="M1347.5 670V654.5H1363" stroke="#fff" stroke-width="1" fill="none" /><path d="M1362.5 655V669.5H1348" stroke="#a0a0a0" stroke-width="1" fill="none" /><path d="M1363.5 654V670.5H1347" stroke="#696969" stroke-width="1" fill="none" /><path d="M1351.500 660h8l-4 4z" fill="#000"  /><rect x="370" y="671" width="977" height="17" fill="url(#trk)"/><rect x="1347" y="671" width="17" height="17" fill="#f0f0f0"/><rect x="370" y="671" width="6" height="17" fill="#f0f0f0"/><path d="M370.5 687V671.5H375" stroke="#fff" stroke-width="1" fill="none" /><path d="M374.5 672V686.5H371" stroke="#a0a0a0" stroke-width="1" fill="none" /><path d="M375.5 671V687.5H370" stroke="#696969" stroke-width="1" fill="none" /><rect x="376" y="671" width="18" height="17" fill="#f0f0f0"/><path d="M376.5 687V671.5H393" stroke="#fff" stroke-width="1" fill="none" /><path d="M392.5 672V686.5H377" stroke="#a0a0a0" stroke-width="1" fill="none" /><path d="M393.5 671V687.5H376" stroke="#696969" stroke-width="1" fill="none" /><path d="M387.500 675.500v8l-4-4z" fill="#000"  /><rect x="394" y="671" width="467" height="17" fill="#f0f0f0"/><path d="M394.5 687V671.5H860" stroke="#fff" stroke-width="1" fill="none" /><path d="M859.5 672V686.5H395" stroke="#a0a0a0" stroke-width="1" fill="none" /><path d="M860.5 671V687.5H394" stroke="#696969" stroke-width="1" fill="none" /><rect x="1330" y="671" width="17" height="17" fill="#f0f0f0"/><path d="M1330.5 687V671.5H1346" stroke="#fff" stroke-width="1" fill="none" /><path d="M1345.5 672V686.5H1331" stroke="#a0a0a0" stroke-width="1" fill="none" /><path d="M1346.5 671V687.5H1330" stroke="#696969" stroke-width="1" fill="none" /><path d="M1337 675.500v8l4-4z" fill="#000"  /></svg><svg id="bt" width="1366" height="47" viewBox="0 689 1366 47" shape-rendering="crispEdges"><rect x="369" y="693" width="11" height="11" fill="#e6e6e6"/><path d="M369.5 703V693.5H379" stroke="#fff" stroke-width="1" fill="none" /><path d="M378.5 694V702.5H370" stroke="#a0a0a0" stroke-width="1" fill="none" /><path d="M379.5 693V703.5H369" stroke="#696969" stroke-width="1" fill="none" /><path d="M372 696l5 5M377 696l-5 5" stroke="#000" stroke-width="1.6" fill="none" shape-rendering="geometricPrecision"/><rect x="382" y="693" width="12" height="11" fill="#c8c8c8"/><path d="M382.5 703V693.5H393" stroke="#fff" stroke-width="1" fill="none" /><path d="M392.5 694V702.5H383" stroke="#a0a0a0" stroke-width="1" fill="none" /><path d="M393.5 693V703.5H382" stroke="#696969" stroke-width="1" fill="none" /><path d="M389.500 695.500v6l-3.500-3z" fill="#000"  shape-rendering="geometricPrecision"/><path d="M396.5 709V692.5H445" stroke="#a0a0a0" stroke-width="1" fill="none" /><path d="M444.5 693V708.5H397" stroke="#fff" stroke-width="1" fill="none" /><rect x="483" y="692" width="263" height="17" fill="#ffff00"/><path d="M483.5 709V692.5H746" stroke="#a0a0a0" stroke-width="1" fill="none" /><path d="M745.5 693V708.5H484" stroke="#fff" stroke-width="1" fill="none" /><rect x="795" y="692" width="70" height="17" fill="#ffff00"/><path d="M795.5 709V692.5H865" stroke="#a0a0a0" stroke-width="1" fill="none" /><path d="M864.5 693V708.5H796" stroke="#fff" stroke-width="1" fill="none" /><rect x="903" y="692" width="463" height="17" fill="#ffff00"/><path d="M903.5 709V692.5H1366" stroke="#a0a0a0" stroke-width="1" fill="none" /><path d="M1365.5 693V708.5H904" stroke="#fff" stroke-width="1" fill="none" /><path d="M530.5 728V711.5H550" stroke="#a0a0a0" stroke-width="1" fill="none" /><path d="M549.5 712V727.5H531" stroke="#fff" stroke-width="1" fill="none" /><path d="M552.5 728V711.5H618" stroke="#a0a0a0" stroke-width="1" fill="none" /><path d="M617.5 712V727.5H553" stroke="#fff" stroke-width="1" fill="none" /><path d="M620.5 728V711.5H876" stroke="#a0a0a0" stroke-width="1" fill="none" /><path d="M875.5 712V727.5H621" stroke="#fff" stroke-width="1" fill="none" /><path d="M878.5 728V711.5H934" stroke="#a0a0a0" stroke-width="1" fill="none" /><path d="M933.5 712V727.5H879" stroke="#fff" stroke-width="1" fill="none" /><path d="M936.5 728V711.5H992" stroke="#a0a0a0" stroke-width="1" fill="none" /><path d="M991.5 712V727.5H937" stroke="#fff" stroke-width="1" fill="none" /><path d="M994.5 728V711.5H1125" stroke="#a0a0a0" stroke-width="1" fill="none" /><path d="M1124.5 712V727.5H995" stroke="#fff" stroke-width="1" fill="none" /><path d="M1127.5 728V711.5H1364" stroke="#a0a0a0" stroke-width="1" fill="none" /><path d="M1363.5 712V727.5H1128" stroke="#fff" stroke-width="1" fill="none" /><rect x="0" y="728" width="1366" height="8" fill="#1f343f"/><rect x="647" y="728" width="83" height="8" fill="#4a5d68"/><rect x="1361" y="728" width="5" height="8" fill="#3a4c56"/></svg><span class="tx" style="left:403px;top:694px;line-height:16px;font-size:12px;">全局的</span><span class="tx" style="left:452px;top:694px;line-height:16px;font-size:12px;letter-spacing:-0.115px;">名称:</span><span class="tx" style="left:486px;top:694px;line-height:16px;font-size:12px;letter-spacing:-0.361px;height:13px;overflow:hidden;">P_First_Cycle</span><span class="tx" style="left:752px;top:694px;line-height:16px;font-size:12px;letter-spacing:0.039px;">地址值:</span><span class="tx" style="left:797px;top:694px;line-height:16px;font-size:12px;letter-spacing:0.310px;">A200.11</span><span class="tx" style="left:872px;top:694px;line-height:16px;font-size:12px;letter-spacing:-0.281px;">注释:</span><span class="tx" style="left:905px;top:694px;line-height:16px;font-size:12px;">第一次循环标志</span><span class="tx" style="left:2px;top:712px;line-height:16px;font-size:12px;letter-spacing:-0.057px;">需要帮助，请按F1</span><span class="tx" style="left:622px;top:712px;line-height:16px;font-size:12px;letter-spacing:0.046px;">新PLC1(网络:0,节点:0) - 离线</span><span class="tx" style="left:997px;top:712px;line-height:16px;font-size:12px;letter-spacing:0.331px;">条 0 (0, 0)  - 100%</span><span id="clock" class="tx">14:22</span><svg id="ime" width="206" height="40" viewBox="1160 690 206 40"><rect x="1186" y="700.500" width="179" height="26.500" rx="13.200" fill="#fff" stroke="#4a8df0" stroke-width="1.200"/><circle cx="1186.200" cy="711" r="16.800" fill="#3d86f4"/><ellipse cx="1186.700" cy="710.800" rx="8.600" ry="9" fill="#4a8ef5" stroke="#fff" stroke-width="3.600"/><path d="M1192 716.500l3.500 3.500" stroke="#fff" stroke-width="3.600" stroke-linecap="round"/><circle cx="1195.200" cy="719.600" r="2.300" fill="#9bdc28"/><text x="1216.500" y="719" font-size="13" font-weight="bold" fill="#2f80ee" text-anchor="middle">中</text><path d="M1239 707.500a6.500 6.500 0 1 1 -6.500 10.500a6.500 7 0 0 0 6.500-10.500z" fill="#2f80ee"/><circle cx="1256.700" cy="715" r="1.600" fill="none" stroke="#2f80ee" stroke-width="1.200"/><circle cx="1263.200" cy="713.800" r="1.450" fill="#2f80ee"/><path d="M1264.650 713.800c0 2.200-0.900 3.600-2.600 4.400l-0.400-0.700c1-0.600 1.400-1.500 1.400-2.600z" fill="#2f80ee"/><path d="M1278.300 719.200l5.500-5.500" stroke="#2f80ee" stroke-width="3.300" stroke-linecap="round"/><path d="M1282 713.200a3.900 3.900 0 0 1 5-4.600l-2.400 2.400l0.500 2l2 0.500l2.400-2.400a3.900 3.900 0 0 1 -4.600 5z" fill="#2f80ee"/><circle cx="1304" cy="714" r="6.400" fill="none" stroke="#2f80ee" stroke-width="1.600"/><circle cx="1301.700" cy="712.300" r="1" fill="#2f80ee"/><circle cx="1306.300" cy="712.300" r="1" fill="#2f80ee"/><path d="M1300.700 715.500a3.600 3.600 0 0 0 6.600 0" fill="none" stroke="#2f80ee" stroke-width="1.300"/><path d="M1322.500 708l-3.500 2.500l1.500 3l1.500-1v7.500h8v-7.500l1.500 1l1.500-3l-3.500-2.500a2 2 0 0 1 -3.500 0z" fill="#2f80ee"/><path d="M1342 708h5.500v5.500h-5.500zM1349 708h5v5.500h-5zM1342 715h5.500v5.500h-5.500zM1349 715h5v5.500h-5z" fill="#2f80ee"/></svg>
</body></html>
